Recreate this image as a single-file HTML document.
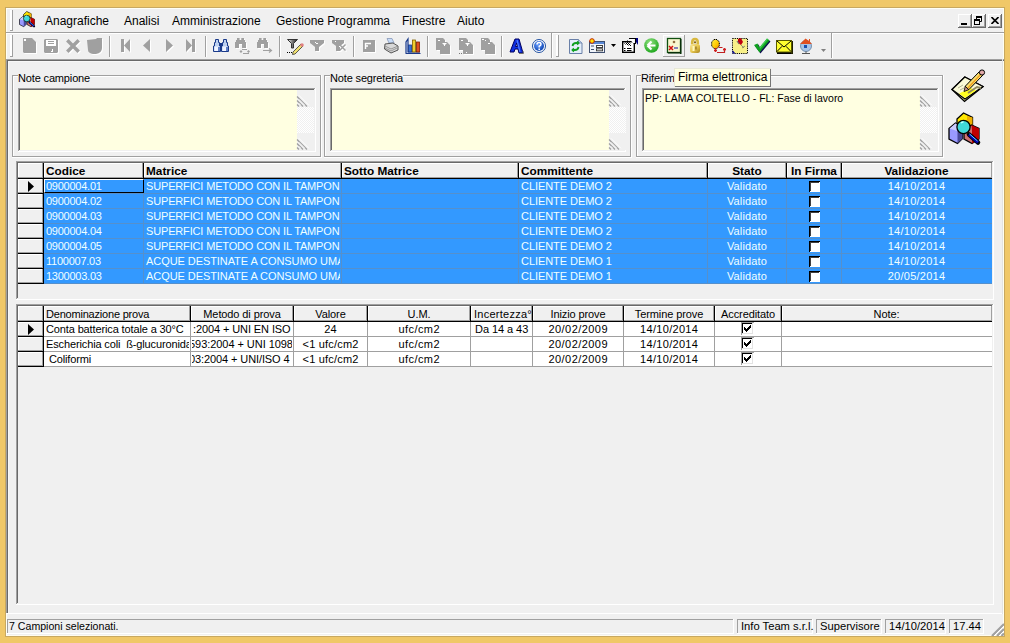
<!DOCTYPE html>
<html><head><meta charset="utf-8"><style>
*{margin:0;padding:0;box-sizing:border-box}
html,body{width:1010px;height:643px;overflow:hidden}
body{background:#F0C868;position:relative;font-family:"Liberation Sans",sans-serif;color:#000}
.a{position:absolute}
.t{white-space:nowrap}
</style></head><body>
<div class="a" style="left:6px;top:8px;width:998px;height:628px;background:#F0F0F0;"></div>
<div class="a" style="left:5px;top:7px;width:1000px;height:1px;background:#C8A860;"></div>
<div class="a" style="left:5px;top:7px;width:1px;height:630px;background:#C8A860;"></div>
<div class="a" style="left:1004px;top:7px;width:1px;height:630px;background:#C8A860;"></div>
<div class="a" style="left:5px;top:636px;width:1000px;height:1px;background:#C8A860;"></div>
<div class="a" style="left:6px;top:8px;width:998px;height:1px;background:#FFFFF4;"></div>
<div class="a" style="left:6px;top:8px;width:1px;height:628px;background:#FFFFF4;"></div>
<div class="a" style="left:1003px;top:8px;width:1px;height:628px;background:#FFFFF0;"></div>
<div class="a" style="left:6px;top:635px;width:998px;height:1px;background:#FFFCF0;"></div>
<div class="a" style="left:10px;top:10px;width:1px;height:21px;background:#FFFFFF;"></div>
<div class="a" style="left:11px;top:10px;width:1px;height:21px;background:#FFFFFF;"></div>
<div class="a" style="left:12px;top:10px;width:1px;height:21px;background:#A0A0A0;"></div>
<div class="a" style="left:10px;top:30px;width:3px;height:1px;background:#A0A0A0;"></div>
<svg class="a" style="left:19px;top:11px;overflow:visible" width="16" height="16" viewBox="0 0 16 16" ><g transform="scale(0.5)">
<path d="M9 7 L15.5 1 L24.5 5.5 L24.5 20 L9 20 Z" fill="#FFE800" stroke="#000" stroke-width="1.3"/>
<path d="M19 4 L24.5 5.5 L24.5 20 L19 20 Z" fill="#F0B000"/>
<path d="M16 18 L23.5 13 L31 16.5 L31 27 L24 31.5 L16 27 Z" fill="#D07070" stroke="#000" stroke-width="1.3"/>
<path d="M23.5 13 L31 16.5 L31 27 L24 31.5 L24 18 Z" fill="#C00000"/>
<path d="M1 16.5 L7.5 11 L14.5 14.5 L14.5 26.5 L9.5 31.5 L1 27 Z" fill="#9999FF" stroke="#000" stroke-width="1.3"/>
<path d="M1.5 16.5 L7.5 11.5 L14 14.5 L9 19 Z" fill="#CCCCFF"/>
<path d="M9.5 19 L14.5 14.5 L14.5 26.5 L9.5 31.5 Z" fill="#4A4A9A"/>
<line x1="21" y1="22.5" x2="30" y2="30.5" stroke="#000" stroke-width="4.5" stroke-linecap="round"/>
<line x1="21" y1="22.5" x2="30" y2="30.5" stroke="#0000B0" stroke-width="3"/>
<line x1="21.5" y1="22" x2="29.5" y2="29" stroke="#60E0FF" stroke-width="1"/>
<circle cx="15.5" cy="15" r="6.6" fill="#40D8D8" stroke="#000" stroke-width="1.3"/>
<path d="M13 11 Q14 10 15.5 10" stroke="#C0FFFF" stroke-width="1.5" fill="none"/>
</g></svg>
<div class="a t" style="left:45px;top:14px;font-size:12px;font-weight:400;color:#000;line-height:15px;color:#000">Anagrafiche</div>
<div class="a t" style="left:124px;top:14px;font-size:12px;font-weight:400;color:#000;line-height:15px;color:#000">Analisi</div>
<div class="a t" style="left:172px;top:14px;font-size:12px;font-weight:400;color:#000;line-height:15px;color:#000">Amministrazione</div>
<div class="a t" style="left:276px;top:14px;font-size:12px;font-weight:400;color:#000;line-height:15px;color:#000">Gestione Programma</div>
<div class="a t" style="left:402px;top:14px;font-size:12px;font-weight:400;color:#000;line-height:15px;color:#000">Finestre</div>
<div class="a t" style="left:457px;top:14px;font-size:12px;font-weight:400;color:#000;line-height:15px;color:#000">Aiuto</div>
<div class="a" style="left:6px;top:32px;width:998px;height:1px;background:#A0A0A0;"></div>
<div class="a" style="left:6px;top:33px;width:998px;height:1px;background:#FFFFFF;"></div>
<div class="a" style="left:958px;top:14px;width:14px;height:14px;background:#F0F0F0;"></div>
<div class="a" style="left:958px;top:14px;width:14px;height:1px;background:#FFFFFF;"></div>
<div class="a" style="left:958px;top:14px;width:1px;height:14px;background:#FFFFFF;"></div>
<div class="a" style="left:958px;top:27px;width:14px;height:1px;background:#696969;"></div>
<div class="a" style="left:971px;top:14px;width:1px;height:14px;background:#696969;"></div>
<div class="a" style="left:959px;top:26px;width:12px;height:1px;background:#A0A0A0;"></div>
<div class="a" style="left:970px;top:15px;width:1px;height:12px;background:#A0A0A0;"></div>
<div class="a" style="left:961px;top:23px;width:6px;height:2px;background:#000"></div>
<div class="a" style="left:972px;top:14px;width:14px;height:14px;background:#F0F0F0;"></div>
<div class="a" style="left:972px;top:14px;width:14px;height:1px;background:#FFFFFF;"></div>
<div class="a" style="left:972px;top:14px;width:1px;height:14px;background:#FFFFFF;"></div>
<div class="a" style="left:972px;top:27px;width:14px;height:1px;background:#696969;"></div>
<div class="a" style="left:985px;top:14px;width:1px;height:14px;background:#696969;"></div>
<div class="a" style="left:973px;top:26px;width:12px;height:1px;background:#A0A0A0;"></div>
<div class="a" style="left:984px;top:15px;width:1px;height:12px;background:#A0A0A0;"></div>
<svg class="a" style="left:974px;top:16px" width="9" height="9"><rect x="2" y="0" width="6" height="2" fill="#000"/><path d="M7.5 0 V5.5 H5.5 M2.5 0 V3" stroke="#000" stroke-width="1" fill="none"/><rect x="0" y="3" width="6" height="2" fill="#000"/><rect x="0.5" y="3.5" width="5" height="5" fill="none" stroke="#000" stroke-width="1"/></svg>
<div class="a" style="left:988px;top:14px;width:14px;height:14px;background:#F0F0F0;"></div>
<div class="a" style="left:988px;top:14px;width:14px;height:1px;background:#FFFFFF;"></div>
<div class="a" style="left:988px;top:14px;width:1px;height:14px;background:#FFFFFF;"></div>
<div class="a" style="left:988px;top:27px;width:14px;height:1px;background:#696969;"></div>
<div class="a" style="left:1001px;top:14px;width:1px;height:14px;background:#696969;"></div>
<div class="a" style="left:989px;top:26px;width:12px;height:1px;background:#A0A0A0;"></div>
<div class="a" style="left:1000px;top:15px;width:1px;height:12px;background:#A0A0A0;"></div>
<svg class="a" style="left:991px;top:17px" width="8" height="7"><path d="M0.5 0 L7.5 7 M7.5 0 L0.5 7" stroke="#000" stroke-width="1.6"/></svg>
<div class="a" style="left:10px;top:35px;width:1px;height:22px;background:#FFFFFF;"></div>
<div class="a" style="left:11px;top:35px;width:1px;height:22px;background:#FFFFFF;"></div>
<div class="a" style="left:12px;top:35px;width:1px;height:22px;background:#A0A0A0;"></div>
<div class="a" style="left:10px;top:56px;width:3px;height:1px;background:#A0A0A0;"></div>
<div class="a" style="left:109px;top:36px;width:1px;height:21px;background:#A0A0A0;"></div>
<div class="a" style="left:110px;top:36px;width:1px;height:21px;background:#FFFFFF;"></div>
<div class="a" style="left:205px;top:36px;width:1px;height:21px;background:#A0A0A0;"></div>
<div class="a" style="left:206px;top:36px;width:1px;height:21px;background:#FFFFFF;"></div>
<div class="a" style="left:279px;top:36px;width:1px;height:21px;background:#A0A0A0;"></div>
<div class="a" style="left:280px;top:36px;width:1px;height:21px;background:#FFFFFF;"></div>
<div class="a" style="left:353px;top:36px;width:1px;height:21px;background:#A0A0A0;"></div>
<div class="a" style="left:354px;top:36px;width:1px;height:21px;background:#FFFFFF;"></div>
<div class="a" style="left:427px;top:36px;width:1px;height:21px;background:#A0A0A0;"></div>
<div class="a" style="left:428px;top:36px;width:1px;height:21px;background:#FFFFFF;"></div>
<div class="a" style="left:501px;top:36px;width:1px;height:21px;background:#A0A0A0;"></div>
<div class="a" style="left:502px;top:36px;width:1px;height:21px;background:#FFFFFF;"></div>
<div class="a" style="left:551px;top:33px;width:1px;height:25px;background:#A0A0A0;"></div>
<div class="a" style="left:552px;top:33px;width:1px;height:25px;background:#FFFFFF;"></div>
<div class="a" style="left:556px;top:35px;width:1px;height:22px;background:#FFFFFF;"></div>
<div class="a" style="left:557px;top:35px;width:1px;height:22px;background:#FFFFFF;"></div>
<div class="a" style="left:558px;top:35px;width:1px;height:22px;background:#A0A0A0;"></div>
<div class="a" style="left:556px;top:56px;width:3px;height:1px;background:#A0A0A0;"></div>
<div class="a" style="left:831px;top:33px;width:1px;height:25px;background:#A0A0A0;"></div>
<div class="a" style="left:832px;top:33px;width:1px;height:25px;background:#FFFFFF;"></div>
<div class="a" style="left:663px;top:35px;width:22px;height:1px;background:#FFFFFF;"></div>
<div class="a" style="left:663px;top:35px;width:1px;height:22px;background:#FFFFFF;"></div>
<div class="a" style="left:663px;top:56px;width:22px;height:1px;background:#A0A0A0;"></div>
<div class="a" style="left:684px;top:35px;width:1px;height:22px;background:#A0A0A0;"></div>
<svg class="a" style="left:23px;top:38px;overflow:visible" width="16" height="17" viewBox="0 0 16 17" ><g transform="translate(1,1)"><path d="M0 0 H9 L13 4 V15 H1 L0 14 Z" fill="#FFFFFF"/></g><path d="M0 0 H9 L13 4 V15 H1 L0 14 Z" fill="#A0A0A0"/><rect x="1" y="1" width="2" height="2" fill="#fff"/></svg><svg class="a" style="left:44px;top:39px;overflow:visible" width="16" height="16" viewBox="0 0 16 16" ><g transform="translate(1,1)"><path d="M0 1 L1 0 H13 L14 1 V13 L13 14 H1 L0 13 Z" fill="#FFFFFF"/></g><path d="M0 1 L1 0 H13 L14 1 V13 L13 14 H1 L0 13 Z" fill="#A0A0A0"/><rect x="2" y="1" width="10" height="6" fill="#fff"/><rect x="4" y="2" width="6" height="1" fill="#A0A0A0"/><rect x="4" y="4" width="6" height="1" fill="#A0A0A0"/><rect x="8" y="10" width="1" height="3" fill="#fff"/><rect x="7" y="12" width="2" height="1" fill="#fff"/></svg><svg class="a" style="left:66px;top:39px;overflow:visible" width="16" height="16" viewBox="0 0 16 16" ><g transform="translate(1,1)"><path d="M1.3 1.3 L12.7 12.7 M12.7 1.3 L1.3 12.7" stroke="#FFFFFF" stroke-width="3.5" stroke-linecap="butt" fill="none"/></g><path d="M1.3 1.3 L12.7 12.7 M12.7 1.3 L1.3 12.7" stroke="#A0A0A0" stroke-width="3.5" stroke-linecap="butt" fill="none"/></svg><svg class="a" style="left:87px;top:38px;overflow:visible" width="17" height="18" viewBox="0 0 17 18" ><g transform="translate(1,1)"><path d="M0 2 L9 1 L10 0 H15 V10 Q15 15 9 16 H6 Q1 15 1 12 Z" fill="#FFFFFF"/></g><path d="M0 2 L9 1 L10 0 H15 V10 Q15 15 9 16 H6 Q1 15 1 12 Z" fill="#A0A0A0"/></svg><svg class="a" style="left:121px;top:39px;overflow:visible" width="12" height="15" viewBox="0 0 12 15" ><g transform="translate(1,1)"><path d="M0 0 H3 V13 H0 Z M3 6.5 L9 0 V13 Z" fill="#FFFFFF"/></g><path d="M0 0 H3 V13 H0 Z M3 6.5 L9 0 V13 Z" fill="#A0A0A0"/></svg><svg class="a" style="left:143px;top:39px;overflow:visible" width="10" height="15" viewBox="0 0 10 15" ><g transform="translate(1,1)"><path d="M0 6.5 L7 0 V13 Z" fill="#FFFFFF"/></g><path d="M0 6.5 L7 0 V13 Z" fill="#A0A0A0"/></svg><svg class="a" style="left:166px;top:39px;overflow:visible" width="10" height="15" viewBox="0 0 10 15" ><g transform="translate(1,1)"><path d="M0 0 L7 6.5 L0 13 Z" fill="#FFFFFF"/></g><path d="M0 0 L7 6.5 L0 13 Z" fill="#A0A0A0"/></svg><svg class="a" style="left:186px;top:39px;overflow:visible" width="12" height="15" viewBox="0 0 12 15" ><g transform="translate(1,1)"><path d="M0 0 L6 6.5 L0 13 Z M6 0 H9 V13 H6 Z" fill="#FFFFFF"/></g><path d="M0 0 L6 6.5 L0 13 Z M6 0 H9 V13 H6 Z" fill="#A0A0A0"/></svg><svg class="a" style="left:213px;top:39px;overflow:visible" width="16" height="14" viewBox="0 0 16 14" ><path d="M2.5 0.5 H5.5 V3.5 H6.5 V7 H7.5 V12.5 H0.5 V7 H1.5 V3.5 H2.5 Z" fill="#BCD0F0" stroke="#1A3A8A" stroke-width="1"/><rect x="1.5" y="7.5" width="5" height="4.5" fill="#F0F4FF"/><rect x="5" y="8" width="2" height="4" fill="#6080C8"/><path d="M10.5 0.5 H13.5 V3.5 H14.5 V7 H15.5 V12.5 H8.5 V7 H9.5 V3.5 H10.5 Z" fill="#BCD0F0" stroke="#1A3A8A" stroke-width="1"/><rect x="9.5" y="7.5" width="5" height="4.5" fill="#F0F4FF"/><rect x="13" y="8" width="2" height="4" fill="#6080C8"/><rect x="7" y="4" width="2" height="3" fill="#1A3A8A"/></svg><svg class="a" style="left:235px;top:38px;overflow:visible" width="13" height="12" viewBox="0 0 13 12" ><g transform="translate(1,1)"><path d="M2 0 H4.6 V2 H6.3 V0 H9 V2 H10 V4 H11 V10 H7 V6 H4 V10 H0 V4 H1 V2 H2 Z" fill="#FFFFFF"/></g><path d="M2 0 H4.6 V2 H6.3 V0 H9 V2 H10 V4 H11 V10 H7 V6 H4 V10 H0 V4 H1 V2 H2 Z" fill="#A0A0A0"/></svg><svg class="a" style="left:239px;top:48px;overflow:visible" width="12" height="7" viewBox="0 0 12 7" ><path d="M3 1.5 H8 M4 5.5 H10" stroke="#A0A0A0" stroke-width="1.2"/><path d="M0.5 3.5 L2 2 L3.5 3.5 L2 5 Z M8 3.5 L9.5 2 L11 3.5 L9.5 5 Z" fill="#A0A0A0"/></svg><svg class="a" style="left:257px;top:38px;overflow:visible" width="13" height="12" viewBox="0 0 13 12" ><g transform="translate(1,1)"><path d="M2 0 H4.6 V2 H6.3 V0 H9 V2 H10 V4 H11 V10 H7 V6 H4 V10 H0 V4 H1 V2 H2 Z" fill="#FFFFFF"/></g><path d="M2 0 H4.6 V2 H6.3 V0 H9 V2 H10 V4 H11 V10 H7 V6 H4 V10 H0 V4 H1 V2 H2 Z" fill="#A0A0A0"/></svg><svg class="a" style="left:263px;top:48px;overflow:visible" width="10" height="6" viewBox="0 0 10 6" ><path d="M0 2.5 H8 M6 0.5 L8.5 2.5 L6 4.5" stroke="#A0A0A0" stroke-width="1.2" fill="none"/></svg><svg class="a" style="left:287px;top:39px;overflow:visible" width="17" height="16" viewBox="0 0 17 16" ><defs><linearGradient id="fg" x1="0" x2="1"><stop offset="0" stop-color="#fff"/><stop offset=".5" stop-color="#777"/><stop offset="1" stop-color="#222"/></linearGradient></defs><path d="M0.5 0.5 H10.5 L6.5 4.5 V9 L4.5 9 V4.5 Z" fill="url(#fg)" stroke="#333" stroke-width="1"/><path d="M6 13 L14 5 L16 7 L8 15 L5.5 15.5 Z" fill="#F0E070" stroke="#333" stroke-width="0.8"/><circle cx="15" cy="6" r="1.8" fill="#E08080"/><rect x="0" y="13" width="1" height="1" fill="#000"/><rect x="2" y="13" width="1" height="1" fill="#000"/><rect x="4" y="13" width="1" height="1" fill="#000"/></svg><svg class="a" style="left:310px;top:40px;overflow:visible" width="16" height="13" viewBox="0 0 16 13" ><g transform="translate(1,1)"><path d="M0 0 H14 V3 L9 7 V11 H5 V7 L0 3 Z" fill="#FFFFFF"/></g><path d="M0 0 H14 V3 L9 7 V11 H5 V7 L0 3 Z" fill="#A0A0A0"/><path d="M5 2 L7 4 L8 3" stroke="#fff" stroke-width="1" fill="none"/></svg><svg class="a" style="left:332px;top:40px;overflow:visible" width="16" height="13" viewBox="0 0 16 13" ><g transform="translate(1,1)"><path d="M0 0 H12 V3 L8 6 V11 H4 V6 L0 3 Z M8 4 L14 10 L13 11 L7 5 Z M13 4 L14 5 L8 11 L7 10 Z" fill="#FFFFFF"/></g><path d="M0 0 H12 V3 L8 6 V11 H4 V6 L0 3 Z M8 4 L14 10 L13 11 L7 5 Z M13 4 L14 5 L8 11 L7 10 Z" fill="#A0A0A0"/><rect x="3" y="1" width="1" height="1" fill="#fff"/><rect x="7" y="6" width="1" height="1" fill="#fff"/></svg><svg class="a" style="left:363px;top:40px;overflow:visible" width="14" height="14" viewBox="0 0 14 14" ><g transform="translate(1,1)"><rect x="0" y="0" width="12" height="12" fill="#FFFFFF"/></g><rect x="0" y="0" width="12" height="12" fill="#A0A0A0"/><path d="M2 3.5 H8 M2.5 3 V9 M2 6 H5" stroke="#fff" stroke-width="1.4" fill="none"/></svg><svg class="a" style="left:384px;top:38px;overflow:visible" width="15" height="16" viewBox="0 0 15 16" ><path d="M3 0.5 L8 0.5 L10 5 L5 5 Z" fill="#C8DCF8" stroke="#8898B8" stroke-width="0.8"/><path d="M1 6 L9 5 L14 8 L14 12 L7 15 L0.5 11 Z" fill="#D8D8D8" stroke="#555" stroke-width="1"/><path d="M1 8 L7 11 L14 8 M1 10 L7 13 L13 10" stroke="#888" stroke-width="0.8" fill="none"/></svg><svg class="a" style="left:405px;top:38px;overflow:visible" width="17" height="17" viewBox="0 0 17 17" ><path d="M1 15 V4 L3 1 V14 H15" stroke="#1A3A8A" stroke-width="1.2" fill="#E8F0FF"/><rect x="3.5" y="7" width="3" height="7" fill="#3A70D0" stroke="#1A3A8A" stroke-width=".8"/><rect x="7.5" y="2" width="3" height="12" fill="#F0D030" stroke="#806000" stroke-width=".8"/><rect x="11.5" y="4" width="3" height="10" fill="#E05020" stroke="#802000" stroke-width=".8"/><path d="M0.5 15.5 H15.5" stroke="#1A3A8A" stroke-width="1"/></svg><svg class="a" style="left:436px;top:38px;overflow:visible" width="15" height="17" viewBox="0 0 15 17" ><g transform="translate(1,1)"><path d="M0 0 H7 L9 2 V4 H11 L14 7 V16 H4 V12 H0 Z" fill="#FFFFFF"/></g><path d="M0 0 H7 L9 2 V4 H11 L14 7 V16 H4 V12 H0 Z" fill="#A0A0A0"/><path d="M6 5 H11 L9 7 V8 H8 V7 Z" fill="#fff"/><rect x="2" y="2" width="2" height="1" fill="#fff"/></svg><svg class="a" style="left:459px;top:38px;overflow:visible" width="15" height="17" viewBox="0 0 15 17" ><g transform="translate(1,1)"><path d="M0 0 H7 L9 2 V4 H11 L14 7 V16 H4 V12 H0 Z" fill="#FFFFFF"/></g><path d="M0 0 H7 L9 2 V4 H11 L14 7 V16 H4 V12 H0 Z" fill="#A0A0A0"/><path d="M6 5 H11 L9 7 V8 H8 V7 Z" fill="#fff"/><rect x="2" y="2" width="2" height="1" fill="#fff"/><rect x="7" y="14" width="1" height="1" fill="#fff"/><rect x="0" y="15" width="1" height="1" fill="#777"/><rect x="2" y="15" width="1" height="1" fill="#777"/></svg><svg class="a" style="left:481px;top:38px;overflow:visible" width="15" height="17" viewBox="0 0 15 17" ><g transform="translate(1,1)"><path d="M0 0 H7 L9 2 V4 H11 L14 7 V16 H4 V12 H0 Z" fill="#FFFFFF"/></g><path d="M0 0 H7 L9 2 V4 H11 L14 7 V16 H4 V12 H0 Z" fill="#A0A0A0"/><rect x="1" y="1" width="2" height="1" fill="#fff"/><rect x="4" y="2" width="1" height="1" fill="#fff"/><rect x="7" y="5" width="2" height="1" fill="#fff"/></svg><svg class="a" style="left:509px;top:38px;overflow:visible" width="16" height="17" viewBox="0 0 16 17" ><path d="M1 14 L6 1 L10 1 L14 15 L10 15 L9 11 L6 11 L5 14 Z M6.5 8.5 L8.5 8.5 L7.7 5 Z" fill="#1030E0" stroke="#000060" stroke-width="1" fill-rule="evenodd"/><path d="M8 2 L11 14" stroke="#5080FF" stroke-width="1.2"/><path d="M10 15.5 L14.5 15.5 L14 13" stroke="#707070" stroke-width="1" fill="none"/></svg><svg class="a" style="left:532px;top:39px;overflow:visible" width="15" height="15" viewBox="0 0 15 15" ><defs><radialGradient id="hg" cx=".4" cy=".35" r=".7"><stop offset="0" stop-color="#6AA0FF"/><stop offset="1" stop-color="#0840B0"/></radialGradient></defs><circle cx="7" cy="7" r="6.5" fill="#fff" stroke="#2050A0" stroke-width="1"/><circle cx="7" cy="7" r="5" fill="url(#hg)"/><path d="M5 5.5 Q5 3.5 7 3.5 Q9 3.5 9 5.2 Q9 6.5 7.2 7.2 V8.5" stroke="#fff" stroke-width="1.5" fill="none"/><rect x="6.4" y="9.5" width="1.6" height="1.6" fill="#fff"/></svg><svg class="a" style="left:569px;top:39px;overflow:visible" width="14" height="16" viewBox="0 0 14 16" ><path d="M0.5 0.5 H9.5 L13 4 V14.5 H0.5 Z" fill="#E4EEFA" stroke="#6A80A8" stroke-width="1"/><path d="M9.5 0.5 V4 H13" fill="#B8CCE8" stroke="#6A80A8" stroke-width=".8"/><path d="M3.5 7 Q4 4 7 4 L9 4 M8 2.5 L9.5 4 L8 5.5" stroke="#10A020" stroke-width="1.8" fill="none"/><path d="M9.5 8 Q9 11 6 11 L4 11 M5 9.5 L3.5 11 L5 12.5" stroke="#10A020" stroke-width="1.8" fill="none"/></svg><svg class="a" style="left:589px;top:39px;overflow:visible" width="17" height="16" viewBox="0 0 17 16" ><rect x="0.5" y="2.5" width="15" height="11" fill="#F0F4FA" stroke="#405070" stroke-width="1"/><rect x="1" y="3" width="14" height="2" fill="#5A8AD8"/><path d="M2 7 H5 M2 10.5 H5" stroke="#405070" stroke-width="1"/><rect x="7.5" y="6.5" width="6" height="2" fill="#fff" stroke="#404040" stroke-width="1"/><rect x="7.5" y="9.8" width="6" height="2" fill="#fff" stroke="#404040" stroke-width="1"/><circle cx="3" cy="2" r="2.3" fill="#FFE000" stroke="#C02000" stroke-width="1"/></svg><svg class="a" style="left:611px;top:44px;overflow:visible" width="6" height="4" viewBox="0 0 6 4" ><path d="M0 0 H5 L2.5 3 Z" fill="#000"/></svg><svg class="a" style="left:622px;top:37px;overflow:visible" width="17" height="17" viewBox="0 0 17 17" ><defs><pattern id="ck" width="2" height="2" patternUnits="userSpaceOnUse"><rect width="1" height="1" fill="#000"/><rect x="1" y="1" width="1" height="1" fill="#000"/></pattern></defs><rect x="0.7" y="4.7" width="11.6" height="10.6" fill="#fff" stroke="#000" stroke-width="1.4"/><path d="M2 11.5 H3.5 M5 11.5 H9.5 M2 13.5 H3.5 M5 13.5 H9.5" stroke="#000" stroke-width="1.1"/><path d="M2 7 L6 3 L10 9 L8 9 Z" fill="url(#ck)"/><path d="M7 1.5 H13.5 V6.5 H11.5" stroke="#000" stroke-width="1.1" fill="#fff"/><path d="M14 1 L16 1 L16 8 L14 5 Z" fill="#000080"/></svg><svg class="a" style="left:644px;top:38px;overflow:visible" width="15" height="15" viewBox="0 0 15 15" ><defs><radialGradient id="gg" cx=".4" cy=".3" r=".8"><stop offset="0" stop-color="#90E080"/><stop offset="1" stop-color="#10A010"/></radialGradient></defs><circle cx="7.5" cy="7.5" r="7.3" fill="url(#gg)"/><path d="M3.5 7.5 L7.5 3.5 M3.5 7.5 L7.5 11.5 M4 7.5 H11.5" stroke="#fff" stroke-width="2.2" fill="none"/></svg><svg class="a" style="left:667px;top:38px;overflow:visible" width="15" height="16" viewBox="0 0 15 16" ><rect x="0.5" y="0.5" width="13" height="14" fill="#F8F8D0" stroke="#105010" stroke-width="1.3"/><rect x="13" y="1" width="1.5" height="15" fill="#083008"/><rect x="1" y="14" width="13" height="1.5" fill="#083008"/><circle cx="7" cy="4" r="1.3" fill="#907040"/><path d="M2 8 L6 12 M6 8 L2 12" stroke="#D01010" stroke-width="1.5"/><path d="M7 10 H11" stroke="#1010A0" stroke-width="1"/></svg><svg class="a" style="left:690px;top:38px;overflow:visible" width="11" height="16" viewBox="0 0 11 16" ><defs><linearGradient id="lg" x1="0" x2="1" y1="0" y2="1"><stop offset="0" stop-color="#F8E8A0"/><stop offset=".5" stop-color="#E8C850"/><stop offset="1" stop-color="#A88420"/></linearGradient></defs><path d="M2.2 6.5 V4.5 Q2.2 1 5 1 Q7.8 1 7.8 4.5 V6.5" stroke="#D8B840" stroke-width="2.6" fill="none"/><circle cx="5" cy="4.3" r="1.1" fill="#806010"/><rect x="0" y="6" width="10" height="9" rx="2.5" fill="url(#lg)"/><rect x="2.5" y="8" width="2" height="5" fill="#FFF8C0"/><rect x="5.3" y="8.5" width="1.3" height="3" fill="#907020"/></svg><svg class="a" style="left:711px;top:39px;overflow:visible" width="16" height="15" viewBox="0 0 16 15" ><defs><linearGradient id="bg2" x1="0" x2="1" y1="0" y2="1"><stop offset="0" stop-color="#FFF040"/><stop offset=".6" stop-color="#FFC800"/><stop offset="1" stop-color="#F08000"/></linearGradient></defs><path d="M3 0.5 L6 0.5 L8.3 3 L8.3 7 L6 9.5 L3 9.5 L0.7 7 L0.7 3 Z" fill="url(#bg2)" stroke="#000" stroke-width="1" stroke-dasharray="1.2 0.6"/><path d="M7.5 8.5 H11.5 M13.5 9 V13.5 H6 M4.5 9 V12" stroke="#C02020" stroke-width="1.2" fill="none"/><path d="M12 10.5 H15 M13.5 9 V12 M3 11.5 H6 M4.5 10 V13" stroke="#D02020" stroke-width="1.3"/></svg><svg class="a" style="left:732px;top:38px;overflow:visible" width="17" height="17" viewBox="0 0 17 17" ><rect x="0.5" y="0.5" width="15" height="15" fill="#F8F088" stroke="#000" stroke-width="1" stroke-dasharray="1.2 1"/><path d="M0.5 12 L3.5 15.5 L0.5 15.5 Z" fill="#1010A0"/><path d="M6 1 L9 0 L11 4 L9 7 L6 5 Z" fill="#C00010"/><path d="M5 3 L7 6" stroke="#777" stroke-width="1.2"/><path d="M9 7 L12 10 M10 10 L13 8" stroke="#909070" stroke-width="1"/></svg><svg class="a" style="left:754px;top:38px;overflow:visible" width="17" height="16" viewBox="0 0 17 16" ><path d="M1 8 L4.5 6.5 L6.5 10.5 L14 1.5 L16.5 3.5 L6.5 15.5 Z" fill="#101050"/><path d="M0 7 L3.5 5.5 L5.5 9.5 L13 0.5 L15.5 2.5 L5.5 14.5 Z" fill="#10A020"/><path d="M5.5 9.5 L13 0.5 L14 1.3 L6 11 Z" fill="#40D050"/></svg><svg class="a" style="left:776px;top:40px;overflow:visible" width="17" height="14" viewBox="0 0 17 14" ><rect x="1" y="12" width="16" height="2" fill="#000"/><rect x="15" y="1" width="2" height="13" fill="#202000"/><rect x="0" y="0" width="16" height="12.5" fill="#5A5A00"/><rect x="1" y="1" width="14" height="10.5" fill="#FFFF30"/><path d="M1 1 L8 7 L15 1 M1 11.5 L6 6.3 M15 11.5 L10 6.3" stroke="#000" stroke-width="1" fill="none"/></svg><svg class="a" style="left:799px;top:38px;overflow:visible" width="14" height="17" viewBox="0 0 14 17" ><circle cx="7" cy="8" r="5.5" fill="#A8C4E8" stroke="#6080A0" stroke-width=".8"/><path d="M1 6 L6.5 0.5 L10 3 L10 1 L11 1 L11 4 L13 6 Z" fill="#E05020"/><rect x="5" y="7" width="3" height="3" fill="#1A50B0"/><path d="M7 13.5 V15 M3 15.5 H11" stroke="#555" stroke-width="1"/></svg><svg class="a" style="left:821px;top:49px;overflow:visible" width="6" height="4" viewBox="0 0 6 4" ><path d="M0 0 H5 L2.5 3 Z" fill="#808080"/></svg>
<div class="a" style="left:6px;top:59px;width:998px;height:1px;background:#A0A0A0;"></div>
<div class="a" style="left:6px;top:60px;width:998px;height:1px;background:#696969;"></div>
<div class="a" style="left:6px;top:59px;width:1px;height:554px;background:#A0A0A0;"></div>
<div class="a" style="left:7px;top:60px;width:1px;height:553px;background:#696969;"></div>
<div class="a" style="left:8px;top:61px;width:1px;height:552px;background:#F8F8F8;"></div>
<div class="a" style="left:8px;top:61px;width:995px;height:1px;background:#F8F8F8;"></div>
<div class="a" style="left:6px;top:613px;width:998px;height:1px;background:#FFFFFF;"></div>
<div class="a" style="left:1002px;top:59px;width:1px;height:555px;background:#E3E3E3;"></div>
<div class="a" style="left:12px;top:75px;width:310px;height:1px;background:#A0A0A0;"></div>
<div class="a" style="left:13px;top:76px;width:309px;height:1px;background:#FFFFFF;"></div>
<div class="a" style="left:12px;top:75px;width:1px;height:83px;background:#A0A0A0;"></div>
<div class="a" style="left:13px;top:76px;width:1px;height:81px;background:#FFFFFF;"></div>
<div class="a" style="left:320px;top:75px;width:1px;height:82px;background:#A0A0A0;"></div>
<div class="a" style="left:321px;top:75px;width:1px;height:83px;background:#FFFFFF;"></div>
<div class="a" style="left:12px;top:156px;width:309px;height:1px;background:#A0A0A0;"></div>
<div class="a" style="left:12px;top:157px;width:310px;height:1px;background:#FFFFFF;"></div>
<div class="a t" style="left:18px;top:71px;padding:0;background:#F0F0F0;font-size:11px;letter-spacing:-0.15px;line-height:14px">Note campione</div>
<div class="a" style="left:18px;top:88px;width:298px;height:64px;background:#FFFFE1;"></div>
<div class="a" style="left:18px;top:88px;width:298px;height:1px;background:#A0A0A0;"></div>
<div class="a" style="left:18px;top:88px;width:1px;height:64px;background:#A0A0A0;"></div>
<div class="a" style="left:19px;top:89px;width:296px;height:1px;background:#696969;"></div>
<div class="a" style="left:19px;top:89px;width:1px;height:62px;background:#696969;"></div>
<div class="a" style="left:18px;top:151px;width:298px;height:1px;background:#FFFFFF;"></div>
<div class="a" style="left:315px;top:88px;width:1px;height:64px;background:#FFFFFF;"></div>
<div class="a" style="left:19px;top:150px;width:296px;height:1px;background:#F0F0F0;"></div>
<div class="a" style="left:314px;top:89px;width:1px;height:62px;background:#F0F0F0;"></div>
<div class="a" style="left:324px;top:75px;width:308px;height:1px;background:#A0A0A0;"></div>
<div class="a" style="left:325px;top:76px;width:307px;height:1px;background:#FFFFFF;"></div>
<div class="a" style="left:324px;top:75px;width:1px;height:83px;background:#A0A0A0;"></div>
<div class="a" style="left:325px;top:76px;width:1px;height:81px;background:#FFFFFF;"></div>
<div class="a" style="left:630px;top:75px;width:1px;height:82px;background:#A0A0A0;"></div>
<div class="a" style="left:631px;top:75px;width:1px;height:83px;background:#FFFFFF;"></div>
<div class="a" style="left:324px;top:156px;width:307px;height:1px;background:#A0A0A0;"></div>
<div class="a" style="left:324px;top:157px;width:308px;height:1px;background:#FFFFFF;"></div>
<div class="a t" style="left:330px;top:71px;padding:0;background:#F0F0F0;font-size:11px;letter-spacing:-0.15px;line-height:14px">Note segreteria</div>
<div class="a" style="left:330px;top:88px;width:296px;height:64px;background:#FFFFE1;"></div>
<div class="a" style="left:330px;top:88px;width:296px;height:1px;background:#A0A0A0;"></div>
<div class="a" style="left:330px;top:88px;width:1px;height:64px;background:#A0A0A0;"></div>
<div class="a" style="left:331px;top:89px;width:294px;height:1px;background:#696969;"></div>
<div class="a" style="left:331px;top:89px;width:1px;height:62px;background:#696969;"></div>
<div class="a" style="left:330px;top:151px;width:296px;height:1px;background:#FFFFFF;"></div>
<div class="a" style="left:625px;top:88px;width:1px;height:64px;background:#FFFFFF;"></div>
<div class="a" style="left:331px;top:150px;width:294px;height:1px;background:#F0F0F0;"></div>
<div class="a" style="left:624px;top:89px;width:1px;height:62px;background:#F0F0F0;"></div>
<div class="a" style="left:636px;top:75px;width:308px;height:1px;background:#A0A0A0;"></div>
<div class="a" style="left:637px;top:76px;width:307px;height:1px;background:#FFFFFF;"></div>
<div class="a" style="left:636px;top:75px;width:1px;height:83px;background:#A0A0A0;"></div>
<div class="a" style="left:637px;top:76px;width:1px;height:81px;background:#FFFFFF;"></div>
<div class="a" style="left:942px;top:75px;width:1px;height:82px;background:#A0A0A0;"></div>
<div class="a" style="left:943px;top:75px;width:1px;height:83px;background:#FFFFFF;"></div>
<div class="a" style="left:636px;top:156px;width:307px;height:1px;background:#A0A0A0;"></div>
<div class="a" style="left:636px;top:157px;width:308px;height:1px;background:#FFFFFF;"></div>
<div class="a t" style="left:641px;top:71px;padding:0;background:#F0F0F0;font-size:11px;letter-spacing:-0.15px;line-height:14px">Riferim</div>
<div class="a" style="left:642px;top:88px;width:297px;height:64px;background:#FFFFE1;"></div>
<div class="a" style="left:642px;top:88px;width:297px;height:1px;background:#A0A0A0;"></div>
<div class="a" style="left:642px;top:88px;width:1px;height:64px;background:#A0A0A0;"></div>
<div class="a" style="left:643px;top:89px;width:295px;height:1px;background:#696969;"></div>
<div class="a" style="left:643px;top:89px;width:1px;height:62px;background:#696969;"></div>
<div class="a" style="left:642px;top:151px;width:297px;height:1px;background:#FFFFFF;"></div>
<div class="a" style="left:938px;top:88px;width:1px;height:64px;background:#FFFFFF;"></div>
<div class="a" style="left:643px;top:150px;width:295px;height:1px;background:#F0F0F0;"></div>
<div class="a" style="left:937px;top:89px;width:1px;height:62px;background:#F0F0F0;"></div>
<div class="a t" style="left:645px;top:91px;font-size:10.5px;font-weight:400;color:#000;line-height:14px;">PP: LAMA COLTELLO - FL: Fase di lavoro</div>
<div class="a" style="left:297px;top:90px;width:17px;height:60px;background:#F0F0F0;"></div>
<div class="a" style="left:297px;top:107px;width:17px;height:26px;background-image:linear-gradient(45deg,#fff 25%,transparent 25%,transparent 75%,#fff 75%),linear-gradient(45deg,#fff 25%,transparent 25%,transparent 75%,#fff 75%);background-size:2px 2px;background-position:0 0,1px 1px;background-color:#F0F0F0"></div>
<svg class="a" style="left:297px;top:91px;overflow:visible" width="17" height="17" viewBox="0 0 17 17" ><path d="M0 5.5 L10 15.5 M0 9.5 L6 15.5 M0 13.5 L2 15.5" stroke="#A0A0A0" stroke-width="1.3"/><path d="M1 5 L11 15 M1 9 L7 15 M1 13 L3 15" stroke="#fff" stroke-width="0.8" transform="translate(0.8,-0.8)"/></svg>
<svg class="a" style="left:297px;top:134px;overflow:visible" width="17" height="17" viewBox="0 0 17 17" ><path d="M0 5.5 L10 15.5 M0 9.5 L6 15.5 M0 13.5 L2 15.5" stroke="#A0A0A0" stroke-width="1.3"/><path d="M1 5 L11 15 M1 9 L7 15 M1 13 L3 15" stroke="#fff" stroke-width="0.8" transform="translate(0.8,-0.8)"/></svg>
<div class="a" style="left:609px;top:90px;width:17px;height:60px;background:#F0F0F0;"></div>
<div class="a" style="left:609px;top:107px;width:17px;height:26px;background-image:linear-gradient(45deg,#fff 25%,transparent 25%,transparent 75%,#fff 75%),linear-gradient(45deg,#fff 25%,transparent 25%,transparent 75%,#fff 75%);background-size:2px 2px;background-position:0 0,1px 1px;background-color:#F0F0F0"></div>
<svg class="a" style="left:609px;top:91px;overflow:visible" width="17" height="17" viewBox="0 0 17 17" ><path d="M0 5.5 L10 15.5 M0 9.5 L6 15.5 M0 13.5 L2 15.5" stroke="#A0A0A0" stroke-width="1.3"/><path d="M1 5 L11 15 M1 9 L7 15 M1 13 L3 15" stroke="#fff" stroke-width="0.8" transform="translate(0.8,-0.8)"/></svg>
<svg class="a" style="left:609px;top:134px;overflow:visible" width="17" height="17" viewBox="0 0 17 17" ><path d="M0 5.5 L10 15.5 M0 9.5 L6 15.5 M0 13.5 L2 15.5" stroke="#A0A0A0" stroke-width="1.3"/><path d="M1 5 L11 15 M1 9 L7 15 M1 13 L3 15" stroke="#fff" stroke-width="0.8" transform="translate(0.8,-0.8)"/></svg>
<div class="a" style="left:920px;top:90px;width:17px;height:60px;background:#F0F0F0;"></div>
<div class="a" style="left:920px;top:107px;width:17px;height:26px;background-image:linear-gradient(45deg,#fff 25%,transparent 25%,transparent 75%,#fff 75%),linear-gradient(45deg,#fff 25%,transparent 25%,transparent 75%,#fff 75%);background-size:2px 2px;background-position:0 0,1px 1px;background-color:#F0F0F0"></div>
<svg class="a" style="left:920px;top:91px;overflow:visible" width="17" height="17" viewBox="0 0 17 17" ><path d="M0 5.5 L10 15.5 M0 9.5 L6 15.5 M0 13.5 L2 15.5" stroke="#A0A0A0" stroke-width="1.3"/><path d="M1 5 L11 15 M1 9 L7 15 M1 13 L3 15" stroke="#fff" stroke-width="0.8" transform="translate(0.8,-0.8)"/></svg>
<svg class="a" style="left:920px;top:134px;overflow:visible" width="17" height="17" viewBox="0 0 17 17" ><path d="M0 5.5 L10 15.5 M0 9.5 L6 15.5 M0 13.5 L2 15.5" stroke="#A0A0A0" stroke-width="1.3"/><path d="M1 5 L11 15 M1 9 L7 15 M1 13 L3 15" stroke="#fff" stroke-width="0.8" transform="translate(0.8,-0.8)"/></svg>
<div class="a" style="left:674px;top:68px;width:97px;height:19px;background:#FFFFE1;"></div>
<div class="a" style="left:770px;top:68px;width:1px;height:19px;background:#767676;"></div>
<div class="a" style="left:674px;top:86px;width:97px;height:1px;background:#767676;"></div>
<div class="a" style="left:674px;top:68px;width:97px;height:1px;background:#E8E8D8;"></div>
<div class="a" style="left:674px;top:68px;width:1px;height:19px;background:#E8E8D8;"></div>
<div class="a t" style="left:678px;top:70px;font-size:12px;font-weight:400;color:#000;line-height:15px;">Firma elettronica</div>
<svg class="a" style="left:951px;top:69px;overflow:visible" width="34" height="34" viewBox="0 0 34 34" >
<path d="M1 20.5 L13.8 8 L32 17.5 L13.5 32.5 Z" fill="#D8D890" stroke="#000" stroke-width="1.3"/>
<path d="M1 20.5 L13.8 8 L32 17.5 L14 30 Z" fill="#FAFAD8" stroke="#000" stroke-width="1.3"/>
<path d="M8 24.5 L14 29 L25 21.5 L20 19 Z" fill="#FFFF20"/>
<path d="M17 24 L26 18 L30 19" stroke="#908860" stroke-width="2" fill="none"/>
<path d="M7 19 L12 16 M9 21 L13 19" stroke="#A0A080" stroke-width="0.8"/>
<path d="M14.2 17.3 L28.2 2.8 L31.8 6.2 L17.8 20.7 Z" fill="#F8E070" stroke="#000" stroke-width="1"/>
<path d="M16.5 19.5 L30 5" stroke="#F0A020" stroke-width="1.4"/>
<path d="M14.2 17.3 L17.8 20.7 L13 22.5 Z" fill="#C09080" stroke="#000" stroke-width="0.8"/>
<circle cx="31" cy="3.5" r="2.6" fill="#E0A8A8" stroke="#000" stroke-width="1"/>
</svg>
<svg class="a" style="left:948px;top:112px;overflow:visible" width="32" height="32" viewBox="0 0 32 32" ><g transform="scale(1.0)">
<path d="M9 7 L15.5 1 L24.5 5.5 L24.5 20 L9 20 Z" fill="#FFE800" stroke="#000" stroke-width="1.3"/>
<path d="M19 4 L24.5 5.5 L24.5 20 L19 20 Z" fill="#F0B000"/>
<path d="M16 18 L23.5 13 L31 16.5 L31 27 L24 31.5 L16 27 Z" fill="#D07070" stroke="#000" stroke-width="1.3"/>
<path d="M23.5 13 L31 16.5 L31 27 L24 31.5 L24 18 Z" fill="#C00000"/>
<path d="M1 16.5 L7.5 11 L14.5 14.5 L14.5 26.5 L9.5 31.5 L1 27 Z" fill="#9999FF" stroke="#000" stroke-width="1.3"/>
<path d="M1.5 16.5 L7.5 11.5 L14 14.5 L9 19 Z" fill="#CCCCFF"/>
<path d="M9.5 19 L14.5 14.5 L14.5 26.5 L9.5 31.5 Z" fill="#4A4A9A"/>
<line x1="21" y1="22.5" x2="30" y2="30.5" stroke="#000" stroke-width="4.5" stroke-linecap="round"/>
<line x1="21" y1="22.5" x2="30" y2="30.5" stroke="#0000B0" stroke-width="3"/>
<line x1="21.5" y1="22" x2="29.5" y2="29" stroke="#60E0FF" stroke-width="1"/>
<circle cx="15.5" cy="15" r="6.6" fill="#40D8D8" stroke="#000" stroke-width="1.3"/>
<path d="M13 11 Q14 10 15.5 10" stroke="#C0FFFF" stroke-width="1.5" fill="none"/>
</g></svg>
<div class="a" style="left:16px;top:161px;width:978px;height:1px;background:#A0A0A0;"></div>
<div class="a" style="left:16px;top:161px;width:1px;height:139px;background:#A0A0A0;"></div>
<div class="a" style="left:17px;top:162px;width:976px;height:1px;background:#696969;"></div>
<div class="a" style="left:17px;top:162px;width:1px;height:137px;background:#696969;"></div>
<div class="a" style="left:16px;top:299px;width:978px;height:1px;background:#FFFFFF;"></div>
<div class="a" style="left:993px;top:161px;width:1px;height:139px;background:#FFFFFF;"></div>
<div class="a" style="left:17px;top:298px;width:976px;height:1px;background:#F0F0F0;"></div>
<div class="a" style="left:992px;top:162px;width:1px;height:137px;background:#F0F0F0;"></div>
<div class="a" style="left:18px;top:163px;width:25px;height:15px;background:#F0F0F0;"></div>
<div class="a" style="left:18px;top:163px;width:25px;height:1px;background:#FFFFFF;"></div>
<div class="a" style="left:18px;top:163px;width:1px;height:15px;background:#FFFFFF;"></div>
<div class="a" style="left:18px;top:177px;width:25px;height:1px;background:#A0A0A0;"></div>
<div class="a" style="left:42px;top:163px;width:1px;height:15px;background:#A0A0A0;"></div>
<div class="a" style="left:43px;top:163px;width:1px;height:16px;background:#000;"></div>
<div class="a" style="left:18px;top:178px;width:26px;height:1px;background:#000;"></div>
<div class="a" style="left:44px;top:163px;width:99px;height:15px;background:#F0F0F0;"></div>
<div class="a" style="left:44px;top:163px;width:99px;height:1px;background:#FFFFFF;"></div>
<div class="a" style="left:44px;top:163px;width:1px;height:15px;background:#FFFFFF;"></div>
<div class="a" style="left:44px;top:177px;width:99px;height:1px;background:#A0A0A0;"></div>
<div class="a" style="left:142px;top:163px;width:1px;height:15px;background:#A0A0A0;"></div>
<div class="a" style="left:143px;top:163px;width:1px;height:16px;background:#000;"></div>
<div class="a" style="left:44px;top:178px;width:100px;height:1px;background:#000;"></div>
<div class="a" style="left:144px;top:163px;width:197px;height:15px;background:#F0F0F0;"></div>
<div class="a" style="left:144px;top:163px;width:197px;height:1px;background:#FFFFFF;"></div>
<div class="a" style="left:144px;top:163px;width:1px;height:15px;background:#FFFFFF;"></div>
<div class="a" style="left:144px;top:177px;width:197px;height:1px;background:#A0A0A0;"></div>
<div class="a" style="left:340px;top:163px;width:1px;height:15px;background:#A0A0A0;"></div>
<div class="a" style="left:341px;top:163px;width:1px;height:16px;background:#000;"></div>
<div class="a" style="left:144px;top:178px;width:198px;height:1px;background:#000;"></div>
<div class="a" style="left:342px;top:163px;width:176px;height:15px;background:#F0F0F0;"></div>
<div class="a" style="left:342px;top:163px;width:176px;height:1px;background:#FFFFFF;"></div>
<div class="a" style="left:342px;top:163px;width:1px;height:15px;background:#FFFFFF;"></div>
<div class="a" style="left:342px;top:177px;width:176px;height:1px;background:#A0A0A0;"></div>
<div class="a" style="left:517px;top:163px;width:1px;height:15px;background:#A0A0A0;"></div>
<div class="a" style="left:518px;top:163px;width:1px;height:16px;background:#000;"></div>
<div class="a" style="left:342px;top:178px;width:177px;height:1px;background:#000;"></div>
<div class="a" style="left:519px;top:163px;width:188px;height:15px;background:#F0F0F0;"></div>
<div class="a" style="left:519px;top:163px;width:188px;height:1px;background:#FFFFFF;"></div>
<div class="a" style="left:519px;top:163px;width:1px;height:15px;background:#FFFFFF;"></div>
<div class="a" style="left:519px;top:177px;width:188px;height:1px;background:#A0A0A0;"></div>
<div class="a" style="left:706px;top:163px;width:1px;height:15px;background:#A0A0A0;"></div>
<div class="a" style="left:707px;top:163px;width:1px;height:16px;background:#000;"></div>
<div class="a" style="left:519px;top:178px;width:189px;height:1px;background:#000;"></div>
<div class="a" style="left:708px;top:163px;width:78px;height:15px;background:#F0F0F0;"></div>
<div class="a" style="left:708px;top:163px;width:78px;height:1px;background:#FFFFFF;"></div>
<div class="a" style="left:708px;top:163px;width:1px;height:15px;background:#FFFFFF;"></div>
<div class="a" style="left:708px;top:177px;width:78px;height:1px;background:#A0A0A0;"></div>
<div class="a" style="left:785px;top:163px;width:1px;height:15px;background:#A0A0A0;"></div>
<div class="a" style="left:786px;top:163px;width:1px;height:16px;background:#000;"></div>
<div class="a" style="left:708px;top:178px;width:79px;height:1px;background:#000;"></div>
<div class="a" style="left:787px;top:163px;width:54px;height:15px;background:#F0F0F0;"></div>
<div class="a" style="left:787px;top:163px;width:54px;height:1px;background:#FFFFFF;"></div>
<div class="a" style="left:787px;top:163px;width:1px;height:15px;background:#FFFFFF;"></div>
<div class="a" style="left:787px;top:177px;width:54px;height:1px;background:#A0A0A0;"></div>
<div class="a" style="left:840px;top:163px;width:1px;height:15px;background:#A0A0A0;"></div>
<div class="a" style="left:841px;top:163px;width:1px;height:16px;background:#000;"></div>
<div class="a" style="left:787px;top:178px;width:55px;height:1px;background:#000;"></div>
<div class="a" style="left:842px;top:163px;width:150px;height:15px;background:#F0F0F0;"></div>
<div class="a" style="left:842px;top:163px;width:150px;height:1px;background:#FFFFFF;"></div>
<div class="a" style="left:842px;top:163px;width:1px;height:15px;background:#FFFFFF;"></div>
<div class="a" style="left:842px;top:177px;width:150px;height:1px;background:#A0A0A0;"></div>
<div class="a" style="left:991px;top:163px;width:1px;height:15px;background:#A0A0A0;"></div>
<div class="a" style="left:842px;top:178px;width:150px;height:1px;background:#000;"></div>
<div class="a t" style="left:46px;top:164px;font-size:11.8px;font-weight:700;color:#000;line-height:14px;">Codice</div>
<div class="a t" style="left:146px;top:164px;font-size:11.8px;font-weight:700;color:#000;line-height:14px;">Matrice</div>
<div class="a t" style="left:344px;top:164px;font-size:11.8px;font-weight:700;color:#000;line-height:14px;">Sotto Matrice</div>
<div class="a t" style="left:521px;top:164px;font-size:11.8px;font-weight:700;color:#000;line-height:14px;">Committente</div>
<div class="a t" style="left:708px;top:164px;width:78px;text-align:center;font-size:11.8px;font-weight:700;color:#000;line-height:14px;">Stato</div>
<div class="a t" style="left:787px;top:164px;width:54px;text-align:center;font-size:11.8px;font-weight:700;color:#000;line-height:14px;">In Firma</div>
<div class="a t" style="left:842px;top:164px;width:149px;text-align:center;font-size:11.8px;font-weight:700;color:#000;line-height:14px;">Validazione</div>
<div class="a" style="left:18px;top:179px;width:25px;height:14px;background:#F0F0F0;"></div>
<div class="a" style="left:18px;top:179px;width:25px;height:1px;background:#FFFFFF;"></div>
<div class="a" style="left:18px;top:179px;width:1px;height:14px;background:#FFFFFF;"></div>
<div class="a" style="left:18px;top:192px;width:25px;height:1px;background:#A0A0A0;"></div>
<div class="a" style="left:42px;top:179px;width:1px;height:14px;background:#A0A0A0;"></div>
<div class="a" style="left:43px;top:179px;width:1px;height:15px;background:#000;"></div>
<div class="a" style="left:18px;top:193px;width:26px;height:1px;background:#000;"></div>
<div class="a" style="left:44px;top:179px;width:948px;height:14px;background:#3399FF;"></div>
<div class="a" style="left:44px;top:193px;width:948px;height:1px;background:#5590CC;"></div>
<div class="a" style="left:143px;top:179px;width:1px;height:15px;background:#5590CC;"></div>
<div class="a" style="left:341px;top:179px;width:1px;height:15px;background:#5590CC;"></div>
<div class="a" style="left:518px;top:179px;width:1px;height:15px;background:#5590CC;"></div>
<div class="a" style="left:707px;top:179px;width:1px;height:15px;background:#5590CC;"></div>
<div class="a" style="left:786px;top:179px;width:1px;height:15px;background:#5590CC;"></div>
<div class="a" style="left:841px;top:179px;width:1px;height:15px;background:#5590CC;"></div>
<div class="a" style="left:44px;top:179px;width:99px;height:14px;overflow:hidden"><div class="t" style="position:absolute;left:2px;top:0;font-size:11px;letter-spacing:-0.25px;line-height:14px;color:#F0FFFF">0900004.01</div></div>
<div class="a" style="left:144px;top:179px;width:196px;height:14px;overflow:hidden"><div class="t" style="position:absolute;left:2px;top:0;font-size:11px;letter-spacing:-0.16px;line-height:14px;color:#F0FFFF">SUPERFICI METODO CON IL TAMPON</div></div>
<div class="a" style="left:519px;top:179px;width:188px;height:14px;overflow:hidden"><div class="t" style="position:absolute;left:2px;top:0;font-size:11px;letter-spacing:-0.06px;line-height:14px;color:#F0FFFF">CLIENTE DEMO 2</div></div>
<div class="a t" style="left:708px;top:179px;width:78px;text-align:center;font-size:11px;letter-spacing:0.15px;line-height:14px;color:#F0FFFF">Validato</div>
<div class="a t" style="left:842px;top:179px;width:149px;text-align:center;font-size:11px;letter-spacing:0.25px;line-height:14px;color:#F0FFFF">14/10/2014</div>
<div class="a" style="left:809px;top:181px;width:11px;height:11px;background:#FFFFFF;"></div>
<div class="a" style="left:809px;top:181px;width:11px;height:1px;background:#000;"></div>
<div class="a" style="left:809px;top:181px;width:1px;height:11px;background:#000;"></div>
<div class="a" style="left:810px;top:182px;width:9px;height:1px;background:#404040;"></div>
<div class="a" style="left:810px;top:182px;width:1px;height:9px;background:#404040;"></div>
<svg class="a" style="left:28px;top:181px" width="7" height="11"><path d="M0 0 L6 5.5 L0 11 Z" fill="#000"/></svg>
<div class="a" style="left:18px;top:194px;width:25px;height:14px;background:#F0F0F0;"></div>
<div class="a" style="left:18px;top:194px;width:25px;height:1px;background:#FFFFFF;"></div>
<div class="a" style="left:18px;top:194px;width:1px;height:14px;background:#FFFFFF;"></div>
<div class="a" style="left:18px;top:207px;width:25px;height:1px;background:#A0A0A0;"></div>
<div class="a" style="left:42px;top:194px;width:1px;height:14px;background:#A0A0A0;"></div>
<div class="a" style="left:43px;top:194px;width:1px;height:15px;background:#000;"></div>
<div class="a" style="left:18px;top:208px;width:26px;height:1px;background:#000;"></div>
<div class="a" style="left:44px;top:194px;width:948px;height:14px;background:#3399FF;"></div>
<div class="a" style="left:44px;top:208px;width:948px;height:1px;background:#5590CC;"></div>
<div class="a" style="left:143px;top:194px;width:1px;height:15px;background:#5590CC;"></div>
<div class="a" style="left:341px;top:194px;width:1px;height:15px;background:#5590CC;"></div>
<div class="a" style="left:518px;top:194px;width:1px;height:15px;background:#5590CC;"></div>
<div class="a" style="left:707px;top:194px;width:1px;height:15px;background:#5590CC;"></div>
<div class="a" style="left:786px;top:194px;width:1px;height:15px;background:#5590CC;"></div>
<div class="a" style="left:841px;top:194px;width:1px;height:15px;background:#5590CC;"></div>
<div class="a" style="left:44px;top:194px;width:99px;height:14px;overflow:hidden"><div class="t" style="position:absolute;left:2px;top:0;font-size:11px;letter-spacing:-0.25px;line-height:14px;color:#F0FFFF">0900004.02</div></div>
<div class="a" style="left:144px;top:194px;width:196px;height:14px;overflow:hidden"><div class="t" style="position:absolute;left:2px;top:0;font-size:11px;letter-spacing:-0.16px;line-height:14px;color:#F0FFFF">SUPERFICI METODO CON IL TAMPON</div></div>
<div class="a" style="left:519px;top:194px;width:188px;height:14px;overflow:hidden"><div class="t" style="position:absolute;left:2px;top:0;font-size:11px;letter-spacing:-0.06px;line-height:14px;color:#F0FFFF">CLIENTE DEMO 2</div></div>
<div class="a t" style="left:708px;top:194px;width:78px;text-align:center;font-size:11px;letter-spacing:0.15px;line-height:14px;color:#F0FFFF">Validato</div>
<div class="a t" style="left:842px;top:194px;width:149px;text-align:center;font-size:11px;letter-spacing:0.25px;line-height:14px;color:#F0FFFF">14/10/2014</div>
<div class="a" style="left:809px;top:196px;width:11px;height:11px;background:#FFFFFF;"></div>
<div class="a" style="left:809px;top:196px;width:11px;height:1px;background:#000;"></div>
<div class="a" style="left:809px;top:196px;width:1px;height:11px;background:#000;"></div>
<div class="a" style="left:810px;top:197px;width:9px;height:1px;background:#404040;"></div>
<div class="a" style="left:810px;top:197px;width:1px;height:9px;background:#404040;"></div>
<div class="a" style="left:18px;top:209px;width:25px;height:14px;background:#F0F0F0;"></div>
<div class="a" style="left:18px;top:209px;width:25px;height:1px;background:#FFFFFF;"></div>
<div class="a" style="left:18px;top:209px;width:1px;height:14px;background:#FFFFFF;"></div>
<div class="a" style="left:18px;top:222px;width:25px;height:1px;background:#A0A0A0;"></div>
<div class="a" style="left:42px;top:209px;width:1px;height:14px;background:#A0A0A0;"></div>
<div class="a" style="left:43px;top:209px;width:1px;height:15px;background:#000;"></div>
<div class="a" style="left:18px;top:223px;width:26px;height:1px;background:#000;"></div>
<div class="a" style="left:44px;top:209px;width:948px;height:14px;background:#3399FF;"></div>
<div class="a" style="left:44px;top:223px;width:948px;height:1px;background:#5590CC;"></div>
<div class="a" style="left:143px;top:209px;width:1px;height:15px;background:#5590CC;"></div>
<div class="a" style="left:341px;top:209px;width:1px;height:15px;background:#5590CC;"></div>
<div class="a" style="left:518px;top:209px;width:1px;height:15px;background:#5590CC;"></div>
<div class="a" style="left:707px;top:209px;width:1px;height:15px;background:#5590CC;"></div>
<div class="a" style="left:786px;top:209px;width:1px;height:15px;background:#5590CC;"></div>
<div class="a" style="left:841px;top:209px;width:1px;height:15px;background:#5590CC;"></div>
<div class="a" style="left:44px;top:209px;width:99px;height:14px;overflow:hidden"><div class="t" style="position:absolute;left:2px;top:0;font-size:11px;letter-spacing:-0.25px;line-height:14px;color:#F0FFFF">0900004.03</div></div>
<div class="a" style="left:144px;top:209px;width:196px;height:14px;overflow:hidden"><div class="t" style="position:absolute;left:2px;top:0;font-size:11px;letter-spacing:-0.16px;line-height:14px;color:#F0FFFF">SUPERFICI METODO CON IL TAMPON</div></div>
<div class="a" style="left:519px;top:209px;width:188px;height:14px;overflow:hidden"><div class="t" style="position:absolute;left:2px;top:0;font-size:11px;letter-spacing:-0.06px;line-height:14px;color:#F0FFFF">CLIENTE DEMO 2</div></div>
<div class="a t" style="left:708px;top:209px;width:78px;text-align:center;font-size:11px;letter-spacing:0.15px;line-height:14px;color:#F0FFFF">Validato</div>
<div class="a t" style="left:842px;top:209px;width:149px;text-align:center;font-size:11px;letter-spacing:0.25px;line-height:14px;color:#F0FFFF">14/10/2014</div>
<div class="a" style="left:809px;top:211px;width:11px;height:11px;background:#FFFFFF;"></div>
<div class="a" style="left:809px;top:211px;width:11px;height:1px;background:#000;"></div>
<div class="a" style="left:809px;top:211px;width:1px;height:11px;background:#000;"></div>
<div class="a" style="left:810px;top:212px;width:9px;height:1px;background:#404040;"></div>
<div class="a" style="left:810px;top:212px;width:1px;height:9px;background:#404040;"></div>
<div class="a" style="left:18px;top:224px;width:25px;height:14px;background:#F0F0F0;"></div>
<div class="a" style="left:18px;top:224px;width:25px;height:1px;background:#FFFFFF;"></div>
<div class="a" style="left:18px;top:224px;width:1px;height:14px;background:#FFFFFF;"></div>
<div class="a" style="left:18px;top:237px;width:25px;height:1px;background:#A0A0A0;"></div>
<div class="a" style="left:42px;top:224px;width:1px;height:14px;background:#A0A0A0;"></div>
<div class="a" style="left:43px;top:224px;width:1px;height:15px;background:#000;"></div>
<div class="a" style="left:18px;top:238px;width:26px;height:1px;background:#000;"></div>
<div class="a" style="left:44px;top:224px;width:948px;height:14px;background:#3399FF;"></div>
<div class="a" style="left:44px;top:238px;width:948px;height:1px;background:#5590CC;"></div>
<div class="a" style="left:143px;top:224px;width:1px;height:15px;background:#5590CC;"></div>
<div class="a" style="left:341px;top:224px;width:1px;height:15px;background:#5590CC;"></div>
<div class="a" style="left:518px;top:224px;width:1px;height:15px;background:#5590CC;"></div>
<div class="a" style="left:707px;top:224px;width:1px;height:15px;background:#5590CC;"></div>
<div class="a" style="left:786px;top:224px;width:1px;height:15px;background:#5590CC;"></div>
<div class="a" style="left:841px;top:224px;width:1px;height:15px;background:#5590CC;"></div>
<div class="a" style="left:44px;top:224px;width:99px;height:14px;overflow:hidden"><div class="t" style="position:absolute;left:2px;top:0;font-size:11px;letter-spacing:-0.25px;line-height:14px;color:#F0FFFF">0900004.04</div></div>
<div class="a" style="left:144px;top:224px;width:196px;height:14px;overflow:hidden"><div class="t" style="position:absolute;left:2px;top:0;font-size:11px;letter-spacing:-0.16px;line-height:14px;color:#F0FFFF">SUPERFICI METODO CON IL TAMPON</div></div>
<div class="a" style="left:519px;top:224px;width:188px;height:14px;overflow:hidden"><div class="t" style="position:absolute;left:2px;top:0;font-size:11px;letter-spacing:-0.06px;line-height:14px;color:#F0FFFF">CLIENTE DEMO 2</div></div>
<div class="a t" style="left:708px;top:224px;width:78px;text-align:center;font-size:11px;letter-spacing:0.15px;line-height:14px;color:#F0FFFF">Validato</div>
<div class="a t" style="left:842px;top:224px;width:149px;text-align:center;font-size:11px;letter-spacing:0.25px;line-height:14px;color:#F0FFFF">14/10/2014</div>
<div class="a" style="left:809px;top:226px;width:11px;height:11px;background:#FFFFFF;"></div>
<div class="a" style="left:809px;top:226px;width:11px;height:1px;background:#000;"></div>
<div class="a" style="left:809px;top:226px;width:1px;height:11px;background:#000;"></div>
<div class="a" style="left:810px;top:227px;width:9px;height:1px;background:#404040;"></div>
<div class="a" style="left:810px;top:227px;width:1px;height:9px;background:#404040;"></div>
<div class="a" style="left:18px;top:239px;width:25px;height:14px;background:#F0F0F0;"></div>
<div class="a" style="left:18px;top:239px;width:25px;height:1px;background:#FFFFFF;"></div>
<div class="a" style="left:18px;top:239px;width:1px;height:14px;background:#FFFFFF;"></div>
<div class="a" style="left:18px;top:252px;width:25px;height:1px;background:#A0A0A0;"></div>
<div class="a" style="left:42px;top:239px;width:1px;height:14px;background:#A0A0A0;"></div>
<div class="a" style="left:43px;top:239px;width:1px;height:15px;background:#000;"></div>
<div class="a" style="left:18px;top:253px;width:26px;height:1px;background:#000;"></div>
<div class="a" style="left:44px;top:239px;width:948px;height:14px;background:#3399FF;"></div>
<div class="a" style="left:44px;top:253px;width:948px;height:1px;background:#5590CC;"></div>
<div class="a" style="left:143px;top:239px;width:1px;height:15px;background:#5590CC;"></div>
<div class="a" style="left:341px;top:239px;width:1px;height:15px;background:#5590CC;"></div>
<div class="a" style="left:518px;top:239px;width:1px;height:15px;background:#5590CC;"></div>
<div class="a" style="left:707px;top:239px;width:1px;height:15px;background:#5590CC;"></div>
<div class="a" style="left:786px;top:239px;width:1px;height:15px;background:#5590CC;"></div>
<div class="a" style="left:841px;top:239px;width:1px;height:15px;background:#5590CC;"></div>
<div class="a" style="left:44px;top:239px;width:99px;height:14px;overflow:hidden"><div class="t" style="position:absolute;left:2px;top:0;font-size:11px;letter-spacing:-0.25px;line-height:14px;color:#F0FFFF">0900004.05</div></div>
<div class="a" style="left:144px;top:239px;width:196px;height:14px;overflow:hidden"><div class="t" style="position:absolute;left:2px;top:0;font-size:11px;letter-spacing:-0.16px;line-height:14px;color:#F0FFFF">SUPERFICI METODO CON IL TAMPON</div></div>
<div class="a" style="left:519px;top:239px;width:188px;height:14px;overflow:hidden"><div class="t" style="position:absolute;left:2px;top:0;font-size:11px;letter-spacing:-0.06px;line-height:14px;color:#F0FFFF">CLIENTE DEMO 2</div></div>
<div class="a t" style="left:708px;top:239px;width:78px;text-align:center;font-size:11px;letter-spacing:0.15px;line-height:14px;color:#F0FFFF">Validato</div>
<div class="a t" style="left:842px;top:239px;width:149px;text-align:center;font-size:11px;letter-spacing:0.25px;line-height:14px;color:#F0FFFF">14/10/2014</div>
<div class="a" style="left:809px;top:241px;width:11px;height:11px;background:#FFFFFF;"></div>
<div class="a" style="left:809px;top:241px;width:11px;height:1px;background:#000;"></div>
<div class="a" style="left:809px;top:241px;width:1px;height:11px;background:#000;"></div>
<div class="a" style="left:810px;top:242px;width:9px;height:1px;background:#404040;"></div>
<div class="a" style="left:810px;top:242px;width:1px;height:9px;background:#404040;"></div>
<div class="a" style="left:18px;top:254px;width:25px;height:14px;background:#F0F0F0;"></div>
<div class="a" style="left:18px;top:254px;width:25px;height:1px;background:#FFFFFF;"></div>
<div class="a" style="left:18px;top:254px;width:1px;height:14px;background:#FFFFFF;"></div>
<div class="a" style="left:18px;top:267px;width:25px;height:1px;background:#A0A0A0;"></div>
<div class="a" style="left:42px;top:254px;width:1px;height:14px;background:#A0A0A0;"></div>
<div class="a" style="left:43px;top:254px;width:1px;height:15px;background:#000;"></div>
<div class="a" style="left:18px;top:268px;width:26px;height:1px;background:#000;"></div>
<div class="a" style="left:44px;top:254px;width:948px;height:14px;background:#3399FF;"></div>
<div class="a" style="left:44px;top:268px;width:948px;height:1px;background:#5590CC;"></div>
<div class="a" style="left:143px;top:254px;width:1px;height:15px;background:#5590CC;"></div>
<div class="a" style="left:341px;top:254px;width:1px;height:15px;background:#5590CC;"></div>
<div class="a" style="left:518px;top:254px;width:1px;height:15px;background:#5590CC;"></div>
<div class="a" style="left:707px;top:254px;width:1px;height:15px;background:#5590CC;"></div>
<div class="a" style="left:786px;top:254px;width:1px;height:15px;background:#5590CC;"></div>
<div class="a" style="left:841px;top:254px;width:1px;height:15px;background:#5590CC;"></div>
<div class="a" style="left:44px;top:254px;width:99px;height:14px;overflow:hidden"><div class="t" style="position:absolute;left:2px;top:0;font-size:11px;letter-spacing:-0.25px;line-height:14px;color:#F0FFFF">1100007.03</div></div>
<div class="a" style="left:144px;top:254px;width:196px;height:14px;overflow:hidden"><div class="t" style="position:absolute;left:2px;top:0;font-size:11px;letter-spacing:-0.07px;line-height:14px;color:#F0FFFF">ACQUE DESTINATE A CONSUMO UMANO</div></div>
<div class="a" style="left:519px;top:254px;width:188px;height:14px;overflow:hidden"><div class="t" style="position:absolute;left:2px;top:0;font-size:11px;letter-spacing:-0.06px;line-height:14px;color:#F0FFFF">CLIENTE DEMO 1</div></div>
<div class="a t" style="left:708px;top:254px;width:78px;text-align:center;font-size:11px;letter-spacing:0.15px;line-height:14px;color:#F0FFFF">Validato</div>
<div class="a t" style="left:842px;top:254px;width:149px;text-align:center;font-size:11px;letter-spacing:0.25px;line-height:14px;color:#F0FFFF">14/10/2014</div>
<div class="a" style="left:809px;top:256px;width:11px;height:11px;background:#FFFFFF;"></div>
<div class="a" style="left:809px;top:256px;width:11px;height:1px;background:#000;"></div>
<div class="a" style="left:809px;top:256px;width:1px;height:11px;background:#000;"></div>
<div class="a" style="left:810px;top:257px;width:9px;height:1px;background:#404040;"></div>
<div class="a" style="left:810px;top:257px;width:1px;height:9px;background:#404040;"></div>
<div class="a" style="left:18px;top:269px;width:25px;height:14px;background:#F0F0F0;"></div>
<div class="a" style="left:18px;top:269px;width:25px;height:1px;background:#FFFFFF;"></div>
<div class="a" style="left:18px;top:269px;width:1px;height:14px;background:#FFFFFF;"></div>
<div class="a" style="left:18px;top:282px;width:25px;height:1px;background:#A0A0A0;"></div>
<div class="a" style="left:42px;top:269px;width:1px;height:14px;background:#A0A0A0;"></div>
<div class="a" style="left:43px;top:269px;width:1px;height:15px;background:#000;"></div>
<div class="a" style="left:18px;top:283px;width:26px;height:1px;background:#000;"></div>
<div class="a" style="left:44px;top:269px;width:948px;height:14px;background:#3399FF;"></div>
<div class="a" style="left:44px;top:283px;width:948px;height:1px;background:#5590CC;"></div>
<div class="a" style="left:143px;top:269px;width:1px;height:15px;background:#5590CC;"></div>
<div class="a" style="left:341px;top:269px;width:1px;height:15px;background:#5590CC;"></div>
<div class="a" style="left:518px;top:269px;width:1px;height:15px;background:#5590CC;"></div>
<div class="a" style="left:707px;top:269px;width:1px;height:15px;background:#5590CC;"></div>
<div class="a" style="left:786px;top:269px;width:1px;height:15px;background:#5590CC;"></div>
<div class="a" style="left:841px;top:269px;width:1px;height:15px;background:#5590CC;"></div>
<div class="a" style="left:44px;top:269px;width:99px;height:14px;overflow:hidden"><div class="t" style="position:absolute;left:2px;top:0;font-size:11px;letter-spacing:-0.25px;line-height:14px;color:#F0FFFF">1300003.03</div></div>
<div class="a" style="left:144px;top:269px;width:196px;height:14px;overflow:hidden"><div class="t" style="position:absolute;left:2px;top:0;font-size:11px;letter-spacing:-0.07px;line-height:14px;color:#F0FFFF">ACQUE DESTINATE A CONSUMO UMANO</div></div>
<div class="a" style="left:519px;top:269px;width:188px;height:14px;overflow:hidden"><div class="t" style="position:absolute;left:2px;top:0;font-size:11px;letter-spacing:-0.06px;line-height:14px;color:#F0FFFF">CLIENTE DEMO 1</div></div>
<div class="a t" style="left:708px;top:269px;width:78px;text-align:center;font-size:11px;letter-spacing:0.15px;line-height:14px;color:#F0FFFF">Validato</div>
<div class="a t" style="left:842px;top:269px;width:149px;text-align:center;font-size:11px;letter-spacing:0.25px;line-height:14px;color:#F0FFFF">20/05/2014</div>
<div class="a" style="left:809px;top:271px;width:11px;height:11px;background:#FFFFFF;"></div>
<div class="a" style="left:809px;top:271px;width:11px;height:1px;background:#000;"></div>
<div class="a" style="left:809px;top:271px;width:1px;height:11px;background:#000;"></div>
<div class="a" style="left:810px;top:272px;width:9px;height:1px;background:#404040;"></div>
<div class="a" style="left:810px;top:272px;width:1px;height:9px;background:#404040;"></div>
<div class="a" style="left:44px;top:179px;width:100px;height:14px;border:1px solid #000;border-top-color:#fff;border-left-color:#fff"></div>
<div class="a" style="left:16px;top:304px;width:978px;height:1px;background:#A0A0A0;"></div>
<div class="a" style="left:16px;top:304px;width:1px;height:301px;background:#A0A0A0;"></div>
<div class="a" style="left:17px;top:305px;width:976px;height:1px;background:#696969;"></div>
<div class="a" style="left:17px;top:305px;width:1px;height:299px;background:#696969;"></div>
<div class="a" style="left:16px;top:604px;width:978px;height:1px;background:#FFFFFF;"></div>
<div class="a" style="left:993px;top:304px;width:1px;height:301px;background:#FFFFFF;"></div>
<div class="a" style="left:17px;top:603px;width:976px;height:1px;background:#F0F0F0;"></div>
<div class="a" style="left:992px;top:305px;width:1px;height:299px;background:#F0F0F0;"></div>
<div class="a" style="left:18px;top:306px;width:25px;height:15px;background:#F0F0F0;"></div>
<div class="a" style="left:18px;top:306px;width:25px;height:1px;background:#FFFFFF;"></div>
<div class="a" style="left:18px;top:306px;width:1px;height:15px;background:#FFFFFF;"></div>
<div class="a" style="left:18px;top:320px;width:25px;height:1px;background:#A0A0A0;"></div>
<div class="a" style="left:42px;top:306px;width:1px;height:15px;background:#A0A0A0;"></div>
<div class="a" style="left:43px;top:306px;width:1px;height:16px;background:#000;"></div>
<div class="a" style="left:18px;top:321px;width:26px;height:1px;background:#000;"></div>
<div class="a" style="left:44px;top:306px;width:146px;height:15px;background:#F0F0F0;"></div>
<div class="a" style="left:44px;top:306px;width:146px;height:1px;background:#FFFFFF;"></div>
<div class="a" style="left:44px;top:306px;width:1px;height:15px;background:#FFFFFF;"></div>
<div class="a" style="left:44px;top:320px;width:146px;height:1px;background:#A0A0A0;"></div>
<div class="a" style="left:189px;top:306px;width:1px;height:15px;background:#A0A0A0;"></div>
<div class="a" style="left:190px;top:306px;width:1px;height:16px;background:#000;"></div>
<div class="a" style="left:44px;top:321px;width:147px;height:1px;background:#000;"></div>
<div class="a" style="left:191px;top:306px;width:102px;height:15px;background:#F0F0F0;"></div>
<div class="a" style="left:191px;top:306px;width:102px;height:1px;background:#FFFFFF;"></div>
<div class="a" style="left:191px;top:306px;width:1px;height:15px;background:#FFFFFF;"></div>
<div class="a" style="left:191px;top:320px;width:102px;height:1px;background:#A0A0A0;"></div>
<div class="a" style="left:292px;top:306px;width:1px;height:15px;background:#A0A0A0;"></div>
<div class="a" style="left:293px;top:306px;width:1px;height:16px;background:#000;"></div>
<div class="a" style="left:191px;top:321px;width:103px;height:1px;background:#000;"></div>
<div class="a" style="left:294px;top:306px;width:73px;height:15px;background:#F0F0F0;"></div>
<div class="a" style="left:294px;top:306px;width:73px;height:1px;background:#FFFFFF;"></div>
<div class="a" style="left:294px;top:306px;width:1px;height:15px;background:#FFFFFF;"></div>
<div class="a" style="left:294px;top:320px;width:73px;height:1px;background:#A0A0A0;"></div>
<div class="a" style="left:366px;top:306px;width:1px;height:15px;background:#A0A0A0;"></div>
<div class="a" style="left:367px;top:306px;width:1px;height:16px;background:#000;"></div>
<div class="a" style="left:294px;top:321px;width:74px;height:1px;background:#000;"></div>
<div class="a" style="left:368px;top:306px;width:102px;height:15px;background:#F0F0F0;"></div>
<div class="a" style="left:368px;top:306px;width:102px;height:1px;background:#FFFFFF;"></div>
<div class="a" style="left:368px;top:306px;width:1px;height:15px;background:#FFFFFF;"></div>
<div class="a" style="left:368px;top:320px;width:102px;height:1px;background:#A0A0A0;"></div>
<div class="a" style="left:469px;top:306px;width:1px;height:15px;background:#A0A0A0;"></div>
<div class="a" style="left:470px;top:306px;width:1px;height:16px;background:#000;"></div>
<div class="a" style="left:368px;top:321px;width:103px;height:1px;background:#000;"></div>
<div class="a" style="left:471px;top:306px;width:61px;height:15px;background:#F0F0F0;"></div>
<div class="a" style="left:471px;top:306px;width:61px;height:1px;background:#FFFFFF;"></div>
<div class="a" style="left:471px;top:306px;width:1px;height:15px;background:#FFFFFF;"></div>
<div class="a" style="left:471px;top:320px;width:61px;height:1px;background:#A0A0A0;"></div>
<div class="a" style="left:531px;top:306px;width:1px;height:15px;background:#A0A0A0;"></div>
<div class="a" style="left:532px;top:306px;width:1px;height:16px;background:#000;"></div>
<div class="a" style="left:471px;top:321px;width:62px;height:1px;background:#000;"></div>
<div class="a" style="left:533px;top:306px;width:90px;height:15px;background:#F0F0F0;"></div>
<div class="a" style="left:533px;top:306px;width:90px;height:1px;background:#FFFFFF;"></div>
<div class="a" style="left:533px;top:306px;width:1px;height:15px;background:#FFFFFF;"></div>
<div class="a" style="left:533px;top:320px;width:90px;height:1px;background:#A0A0A0;"></div>
<div class="a" style="left:622px;top:306px;width:1px;height:15px;background:#A0A0A0;"></div>
<div class="a" style="left:623px;top:306px;width:1px;height:16px;background:#000;"></div>
<div class="a" style="left:533px;top:321px;width:91px;height:1px;background:#000;"></div>
<div class="a" style="left:624px;top:306px;width:90px;height:15px;background:#F0F0F0;"></div>
<div class="a" style="left:624px;top:306px;width:90px;height:1px;background:#FFFFFF;"></div>
<div class="a" style="left:624px;top:306px;width:1px;height:15px;background:#FFFFFF;"></div>
<div class="a" style="left:624px;top:320px;width:90px;height:1px;background:#A0A0A0;"></div>
<div class="a" style="left:713px;top:306px;width:1px;height:15px;background:#A0A0A0;"></div>
<div class="a" style="left:714px;top:306px;width:1px;height:16px;background:#000;"></div>
<div class="a" style="left:624px;top:321px;width:91px;height:1px;background:#000;"></div>
<div class="a" style="left:715px;top:306px;width:66px;height:15px;background:#F0F0F0;"></div>
<div class="a" style="left:715px;top:306px;width:66px;height:1px;background:#FFFFFF;"></div>
<div class="a" style="left:715px;top:306px;width:1px;height:15px;background:#FFFFFF;"></div>
<div class="a" style="left:715px;top:320px;width:66px;height:1px;background:#A0A0A0;"></div>
<div class="a" style="left:780px;top:306px;width:1px;height:15px;background:#A0A0A0;"></div>
<div class="a" style="left:781px;top:306px;width:1px;height:16px;background:#000;"></div>
<div class="a" style="left:715px;top:321px;width:67px;height:1px;background:#000;"></div>
<div class="a" style="left:782px;top:306px;width:210px;height:15px;background:#F0F0F0;"></div>
<div class="a" style="left:782px;top:306px;width:210px;height:1px;background:#FFFFFF;"></div>
<div class="a" style="left:782px;top:306px;width:1px;height:15px;background:#FFFFFF;"></div>
<div class="a" style="left:782px;top:320px;width:210px;height:1px;background:#A0A0A0;"></div>
<div class="a" style="left:991px;top:306px;width:1px;height:15px;background:#A0A0A0;"></div>
<div class="a" style="left:782px;top:321px;width:210px;height:1px;background:#000;"></div>
<div class="a t" style="left:46px;top:307px;font-size:11px;font-weight:400;color:#000;line-height:14px;letter-spacing:-0.2px">Denominazione prova</div>
<div class="a t" style="left:191px;top:307px;width:102px;text-align:center;font-size:11px;font-weight:400;color:#000;line-height:14px;letter-spacing:-0.1px">Metodo di prova</div>
<div class="a t" style="left:294px;top:307px;width:73px;text-align:center;font-size:11px;font-weight:400;color:#000;line-height:14px;letter-spacing:-0.1px">Valore</div>
<div class="a t" style="left:368px;top:307px;width:102px;text-align:center;font-size:11px;font-weight:400;color:#000;line-height:14px;letter-spacing:-0.1px">U.M.</div>
<div class="a t" style="left:474px;top:307px;font-size:11px;font-weight:400;color:#000;line-height:14px;letter-spacing:0.25px">Incertezza°</div>
<div class="a t" style="left:533px;top:307px;width:90px;text-align:center;font-size:11px;font-weight:400;color:#000;line-height:14px;letter-spacing:-0.1px">Inizio prove</div>
<div class="a t" style="left:624px;top:307px;width:90px;text-align:center;font-size:11px;font-weight:400;color:#000;line-height:14px;letter-spacing:-0.1px">Termine prove</div>
<div class="a t" style="left:715px;top:307px;width:66px;text-align:center;font-size:11px;font-weight:400;color:#000;line-height:14px;letter-spacing:-0.1px">Accreditato</div>
<div class="a t" style="left:782px;top:307px;width:209px;text-align:center;font-size:11px;font-weight:400;color:#000;line-height:14px;letter-spacing:-0.1px">Note:</div>
<div class="a" style="left:18px;top:322px;width:25px;height:14px;background:#F0F0F0;"></div>
<div class="a" style="left:18px;top:322px;width:25px;height:1px;background:#FFFFFF;"></div>
<div class="a" style="left:18px;top:322px;width:1px;height:14px;background:#FFFFFF;"></div>
<div class="a" style="left:18px;top:335px;width:25px;height:1px;background:#A0A0A0;"></div>
<div class="a" style="left:42px;top:322px;width:1px;height:14px;background:#A0A0A0;"></div>
<div class="a" style="left:43px;top:322px;width:1px;height:15px;background:#000;"></div>
<div class="a" style="left:18px;top:336px;width:26px;height:1px;background:#000;"></div>
<div class="a" style="left:44px;top:322px;width:948px;height:14px;background:#FFFFFF;"></div>
<div class="a" style="left:44px;top:336px;width:948px;height:1px;background:#A0A0A0;"></div>
<div class="a" style="left:190px;top:322px;width:1px;height:15px;background:#A0A0A0;"></div>
<div class="a" style="left:293px;top:322px;width:1px;height:15px;background:#A0A0A0;"></div>
<div class="a" style="left:367px;top:322px;width:1px;height:15px;background:#A0A0A0;"></div>
<div class="a" style="left:470px;top:322px;width:1px;height:15px;background:#A0A0A0;"></div>
<div class="a" style="left:532px;top:322px;width:1px;height:15px;background:#A0A0A0;"></div>
<div class="a" style="left:623px;top:322px;width:1px;height:15px;background:#A0A0A0;"></div>
<div class="a" style="left:714px;top:322px;width:1px;height:15px;background:#A0A0A0;"></div>
<div class="a" style="left:781px;top:322px;width:1px;height:15px;background:#A0A0A0;"></div>
<div class="a" style="left:44px;top:322px;width:145px;height:14px;overflow:hidden"><div class="t" style="position:absolute;left:2px;top:0;font-size:11px;line-height:14px;letter-spacing:-0.13px;white-space:pre">Conta batterica totale a 30°C</div></div>
<div class="a" style="left:192px;top:322px;width:100px;height:14px;overflow:hidden"><div class="t" style="position:absolute;left:1px;top:0;font-size:11px;line-height:14px;letter-spacing:-0.1px">:2004 + UNI EN ISO</div></div>
<div class="a t" style="left:294px;top:322px;width:73px;text-align:center;font-size:11px;font-weight:400;color:#000;line-height:14px;letter-spacing:0.2px;text-indent:0.2px">24</div>
<div class="a t" style="left:368px;top:322px;width:102px;text-align:center;font-size:11px;font-weight:400;color:#000;line-height:14px;letter-spacing:0.45px;text-indent:0.45px">ufc/cm2</div>
<div class="a t" style="left:475px;top:322px;font-size:11px;font-weight:400;color:#000;line-height:14px;letter-spacing:-0.06px">Da 14 a 43</div>
<div class="a t" style="left:533px;top:322px;width:90px;text-align:center;font-size:11px;font-weight:400;color:#000;line-height:14px;letter-spacing:0.45px;text-indent:0.45px">20/02/2009</div>
<div class="a t" style="left:624px;top:322px;width:90px;text-align:center;font-size:11px;font-weight:400;color:#000;line-height:14px;letter-spacing:0.31px;text-indent:0.31px">14/10/2014</div>
<svg class="a" style="left:28px;top:324px" width="7" height="11"><path d="M0 0 L6 5.5 L0 11 Z" fill="#000"/></svg>
<div class="a" style="left:741px;top:322px;width:13px;height:13px;background:#FFFFFF;"></div>
<div class="a" style="left:741px;top:322px;width:13px;height:1px;background:#A0A0A0;"></div>
<div class="a" style="left:741px;top:322px;width:1px;height:13px;background:#A0A0A0;"></div>
<div class="a" style="left:742px;top:323px;width:11px;height:1px;background:#000;"></div>
<div class="a" style="left:742px;top:323px;width:1px;height:11px;background:#000;"></div>
<div class="a" style="left:742px;top:333px;width:11px;height:1px;background:#E3E3E3;"></div>
<div class="a" style="left:752px;top:323px;width:1px;height:11px;background:#E3E3E3;"></div>
<svg class="a" style="left:744px;top:325px" width="7" height="7" shape-rendering="crispEdges" fill="#000"><rect x="6" y="0" width="1" height="1"/><rect x="5" y="1" width="1" height="1"/><rect x="6" y="1" width="1" height="1"/><rect x="0" y="2" width="1" height="1"/><rect x="4" y="2" width="1" height="1"/><rect x="5" y="2" width="1" height="1"/><rect x="6" y="2" width="1" height="1"/><rect x="0" y="3" width="1" height="1"/><rect x="1" y="3" width="1" height="1"/><rect x="3" y="3" width="1" height="1"/><rect x="4" y="3" width="1" height="1"/><rect x="5" y="3" width="1" height="1"/><rect x="0" y="4" width="1" height="1"/><rect x="1" y="4" width="1" height="1"/><rect x="2" y="4" width="1" height="1"/><rect x="3" y="4" width="1" height="1"/><rect x="4" y="4" width="1" height="1"/><rect x="1" y="5" width="1" height="1"/><rect x="2" y="5" width="1" height="1"/><rect x="3" y="5" width="1" height="1"/><rect x="2" y="6" width="1" height="1"/></svg>
<div class="a" style="left:18px;top:337px;width:25px;height:14px;background:#F0F0F0;"></div>
<div class="a" style="left:18px;top:337px;width:25px;height:1px;background:#FFFFFF;"></div>
<div class="a" style="left:18px;top:337px;width:1px;height:14px;background:#FFFFFF;"></div>
<div class="a" style="left:18px;top:350px;width:25px;height:1px;background:#A0A0A0;"></div>
<div class="a" style="left:42px;top:337px;width:1px;height:14px;background:#A0A0A0;"></div>
<div class="a" style="left:43px;top:337px;width:1px;height:15px;background:#000;"></div>
<div class="a" style="left:18px;top:351px;width:26px;height:1px;background:#000;"></div>
<div class="a" style="left:44px;top:337px;width:948px;height:14px;background:#FFFFFF;"></div>
<div class="a" style="left:44px;top:351px;width:948px;height:1px;background:#A0A0A0;"></div>
<div class="a" style="left:190px;top:337px;width:1px;height:15px;background:#A0A0A0;"></div>
<div class="a" style="left:293px;top:337px;width:1px;height:15px;background:#A0A0A0;"></div>
<div class="a" style="left:367px;top:337px;width:1px;height:15px;background:#A0A0A0;"></div>
<div class="a" style="left:470px;top:337px;width:1px;height:15px;background:#A0A0A0;"></div>
<div class="a" style="left:532px;top:337px;width:1px;height:15px;background:#A0A0A0;"></div>
<div class="a" style="left:623px;top:337px;width:1px;height:15px;background:#A0A0A0;"></div>
<div class="a" style="left:714px;top:337px;width:1px;height:15px;background:#A0A0A0;"></div>
<div class="a" style="left:781px;top:337px;width:1px;height:15px;background:#A0A0A0;"></div>
<div class="a" style="left:44px;top:337px;width:145px;height:14px;overflow:hidden"><div class="t" style="position:absolute;left:2px;top:0;font-size:11px;line-height:14px;letter-spacing:-0.13px;white-space:pre">Escherichia coli &nbsp;ß-glucuronidasi</div></div>
<div class="a" style="left:192px;top:337px;width:100px;height:14px;overflow:hidden"><div class="t" style="position:absolute;left:-3px;top:0;font-size:11px;line-height:14px;letter-spacing:-0.05px">593:2004 + UNI 10980</div></div>
<div class="a t" style="left:294px;top:337px;width:73px;text-align:center;font-size:11px;font-weight:400;color:#000;line-height:14px;letter-spacing:0.2px;text-indent:0.2px">&lt;1 ufc/cm2</div>
<div class="a t" style="left:368px;top:337px;width:102px;text-align:center;font-size:11px;font-weight:400;color:#000;line-height:14px;letter-spacing:0.45px;text-indent:0.45px">ufc/cm2</div>
<div class="a t" style="left:475px;top:337px;font-size:11px;font-weight:400;color:#000;line-height:14px;letter-spacing:-0.06px"></div>
<div class="a t" style="left:533px;top:337px;width:90px;text-align:center;font-size:11px;font-weight:400;color:#000;line-height:14px;letter-spacing:0.45px;text-indent:0.45px">20/02/2009</div>
<div class="a t" style="left:624px;top:337px;width:90px;text-align:center;font-size:11px;font-weight:400;color:#000;line-height:14px;letter-spacing:0.31px;text-indent:0.31px">14/10/2014</div>
<div class="a" style="left:741px;top:337px;width:13px;height:13px;background:#FFFFFF;"></div>
<div class="a" style="left:741px;top:337px;width:13px;height:1px;background:#A0A0A0;"></div>
<div class="a" style="left:741px;top:337px;width:1px;height:13px;background:#A0A0A0;"></div>
<div class="a" style="left:742px;top:338px;width:11px;height:1px;background:#000;"></div>
<div class="a" style="left:742px;top:338px;width:1px;height:11px;background:#000;"></div>
<div class="a" style="left:742px;top:348px;width:11px;height:1px;background:#E3E3E3;"></div>
<div class="a" style="left:752px;top:338px;width:1px;height:11px;background:#E3E3E3;"></div>
<svg class="a" style="left:744px;top:340px" width="7" height="7" shape-rendering="crispEdges" fill="#000"><rect x="6" y="0" width="1" height="1"/><rect x="5" y="1" width="1" height="1"/><rect x="6" y="1" width="1" height="1"/><rect x="0" y="2" width="1" height="1"/><rect x="4" y="2" width="1" height="1"/><rect x="5" y="2" width="1" height="1"/><rect x="6" y="2" width="1" height="1"/><rect x="0" y="3" width="1" height="1"/><rect x="1" y="3" width="1" height="1"/><rect x="3" y="3" width="1" height="1"/><rect x="4" y="3" width="1" height="1"/><rect x="5" y="3" width="1" height="1"/><rect x="0" y="4" width="1" height="1"/><rect x="1" y="4" width="1" height="1"/><rect x="2" y="4" width="1" height="1"/><rect x="3" y="4" width="1" height="1"/><rect x="4" y="4" width="1" height="1"/><rect x="1" y="5" width="1" height="1"/><rect x="2" y="5" width="1" height="1"/><rect x="3" y="5" width="1" height="1"/><rect x="2" y="6" width="1" height="1"/></svg>
<div class="a" style="left:18px;top:352px;width:25px;height:14px;background:#F0F0F0;"></div>
<div class="a" style="left:18px;top:352px;width:25px;height:1px;background:#FFFFFF;"></div>
<div class="a" style="left:18px;top:352px;width:1px;height:14px;background:#FFFFFF;"></div>
<div class="a" style="left:18px;top:365px;width:25px;height:1px;background:#A0A0A0;"></div>
<div class="a" style="left:42px;top:352px;width:1px;height:14px;background:#A0A0A0;"></div>
<div class="a" style="left:43px;top:352px;width:1px;height:15px;background:#000;"></div>
<div class="a" style="left:18px;top:366px;width:26px;height:1px;background:#000;"></div>
<div class="a" style="left:44px;top:352px;width:948px;height:14px;background:#FFFFFF;"></div>
<div class="a" style="left:44px;top:366px;width:948px;height:1px;background:#A0A0A0;"></div>
<div class="a" style="left:190px;top:352px;width:1px;height:15px;background:#A0A0A0;"></div>
<div class="a" style="left:293px;top:352px;width:1px;height:15px;background:#A0A0A0;"></div>
<div class="a" style="left:367px;top:352px;width:1px;height:15px;background:#A0A0A0;"></div>
<div class="a" style="left:470px;top:352px;width:1px;height:15px;background:#A0A0A0;"></div>
<div class="a" style="left:532px;top:352px;width:1px;height:15px;background:#A0A0A0;"></div>
<div class="a" style="left:623px;top:352px;width:1px;height:15px;background:#A0A0A0;"></div>
<div class="a" style="left:714px;top:352px;width:1px;height:15px;background:#A0A0A0;"></div>
<div class="a" style="left:781px;top:352px;width:1px;height:15px;background:#A0A0A0;"></div>
<div class="a" style="left:44px;top:352px;width:145px;height:14px;overflow:hidden"><div class="t" style="position:absolute;left:2px;top:0;font-size:11px;line-height:14px;letter-spacing:-0.13px;white-space:pre">&nbsp;Coliformi</div></div>
<div class="a" style="left:192px;top:352px;width:100px;height:14px;overflow:hidden"><div class="t" style="position:absolute;left:-3px;top:0;font-size:11px;line-height:14px;letter-spacing:-0.1px">03:2004 + UNI/ISO 4</div></div>
<div class="a t" style="left:294px;top:352px;width:73px;text-align:center;font-size:11px;font-weight:400;color:#000;line-height:14px;letter-spacing:0.2px;text-indent:0.2px">&lt;1 ufc/cm2</div>
<div class="a t" style="left:368px;top:352px;width:102px;text-align:center;font-size:11px;font-weight:400;color:#000;line-height:14px;letter-spacing:0.45px;text-indent:0.45px">ufc/cm2</div>
<div class="a t" style="left:475px;top:352px;font-size:11px;font-weight:400;color:#000;line-height:14px;letter-spacing:-0.06px"></div>
<div class="a t" style="left:533px;top:352px;width:90px;text-align:center;font-size:11px;font-weight:400;color:#000;line-height:14px;letter-spacing:0.45px;text-indent:0.45px">20/02/2009</div>
<div class="a t" style="left:624px;top:352px;width:90px;text-align:center;font-size:11px;font-weight:400;color:#000;line-height:14px;letter-spacing:0.31px;text-indent:0.31px">14/10/2014</div>
<div class="a" style="left:741px;top:352px;width:13px;height:13px;background:#FFFFFF;"></div>
<div class="a" style="left:741px;top:352px;width:13px;height:1px;background:#A0A0A0;"></div>
<div class="a" style="left:741px;top:352px;width:1px;height:13px;background:#A0A0A0;"></div>
<div class="a" style="left:742px;top:353px;width:11px;height:1px;background:#000;"></div>
<div class="a" style="left:742px;top:353px;width:1px;height:11px;background:#000;"></div>
<div class="a" style="left:742px;top:363px;width:11px;height:1px;background:#E3E3E3;"></div>
<div class="a" style="left:752px;top:353px;width:1px;height:11px;background:#E3E3E3;"></div>
<svg class="a" style="left:744px;top:355px" width="7" height="7" shape-rendering="crispEdges" fill="#000"><rect x="6" y="0" width="1" height="1"/><rect x="5" y="1" width="1" height="1"/><rect x="6" y="1" width="1" height="1"/><rect x="0" y="2" width="1" height="1"/><rect x="4" y="2" width="1" height="1"/><rect x="5" y="2" width="1" height="1"/><rect x="6" y="2" width="1" height="1"/><rect x="0" y="3" width="1" height="1"/><rect x="1" y="3" width="1" height="1"/><rect x="3" y="3" width="1" height="1"/><rect x="4" y="3" width="1" height="1"/><rect x="5" y="3" width="1" height="1"/><rect x="0" y="4" width="1" height="1"/><rect x="1" y="4" width="1" height="1"/><rect x="2" y="4" width="1" height="1"/><rect x="3" y="4" width="1" height="1"/><rect x="4" y="4" width="1" height="1"/><rect x="1" y="5" width="1" height="1"/><rect x="2" y="5" width="1" height="1"/><rect x="3" y="5" width="1" height="1"/><rect x="2" y="6" width="1" height="1"/></svg>
<div class="a" style="left:7px;top:619px;width:727px;height:1px;background:#A0A0A0;"></div>
<div class="a" style="left:7px;top:619px;width:1px;height:15px;background:#A0A0A0;"></div>
<div class="a" style="left:7px;top:633px;width:727px;height:1px;background:#FFFFFF;"></div>
<div class="a" style="left:733px;top:619px;width:1px;height:15px;background:#FFFFFF;"></div>
<div class="a t" style="left:9px;top:619px;font-size:10.6px;font-weight:400;color:#000;line-height:14px;">7 Campioni selezionati.</div>
<div class="a" style="left:737px;top:619px;width:76px;height:1px;background:#A0A0A0;"></div>
<div class="a" style="left:737px;top:619px;width:1px;height:15px;background:#A0A0A0;"></div>
<div class="a" style="left:737px;top:633px;width:76px;height:1px;background:#FFFFFF;"></div>
<div class="a" style="left:812px;top:619px;width:1px;height:15px;background:#FFFFFF;"></div>
<div class="a t" style="left:741px;top:619px;font-size:11.2px;font-weight:400;color:#000;line-height:14px;">Info Team s.r.l.</div>
<div class="a" style="left:816px;top:619px;width:66px;height:1px;background:#A0A0A0;"></div>
<div class="a" style="left:816px;top:619px;width:1px;height:15px;background:#A0A0A0;"></div>
<div class="a" style="left:816px;top:633px;width:66px;height:1px;background:#FFFFFF;"></div>
<div class="a" style="left:881px;top:619px;width:1px;height:15px;background:#FFFFFF;"></div>
<div class="a t" style="left:820px;top:619px;font-size:11.2px;font-weight:400;color:#000;line-height:14px;">Supervisore</div>
<div class="a" style="left:885px;top:619px;width:61px;height:1px;background:#A0A0A0;"></div>
<div class="a" style="left:885px;top:619px;width:1px;height:15px;background:#A0A0A0;"></div>
<div class="a" style="left:885px;top:633px;width:61px;height:1px;background:#FFFFFF;"></div>
<div class="a" style="left:945px;top:619px;width:1px;height:15px;background:#FFFFFF;"></div>
<div class="a t" style="left:889px;top:619px;font-size:11.2px;font-weight:400;color:#000;line-height:14px;">14/10/2014</div>
<div class="a" style="left:949px;top:619px;width:35px;height:1px;background:#A0A0A0;"></div>
<div class="a" style="left:949px;top:619px;width:1px;height:15px;background:#A0A0A0;"></div>
<div class="a" style="left:949px;top:633px;width:35px;height:1px;background:#FFFFFF;"></div>
<div class="a" style="left:983px;top:619px;width:1px;height:15px;background:#FFFFFF;"></div>
<div class="a t" style="left:953px;top:619px;font-size:11.2px;font-weight:400;color:#000;line-height:14px;">17.44</div>
<svg class="a" style="left:991px;top:623px" width="13" height="13"><path d="M1 13 L13 1 M6 13 L13 6 M10.5 13 L13 10.5" stroke="#A0A0A0" stroke-width="2.2"/><path d="M3 13 L13 3 M8 13 L13 8" stroke="#fff" stroke-width="1"/></svg>
</body></html>
